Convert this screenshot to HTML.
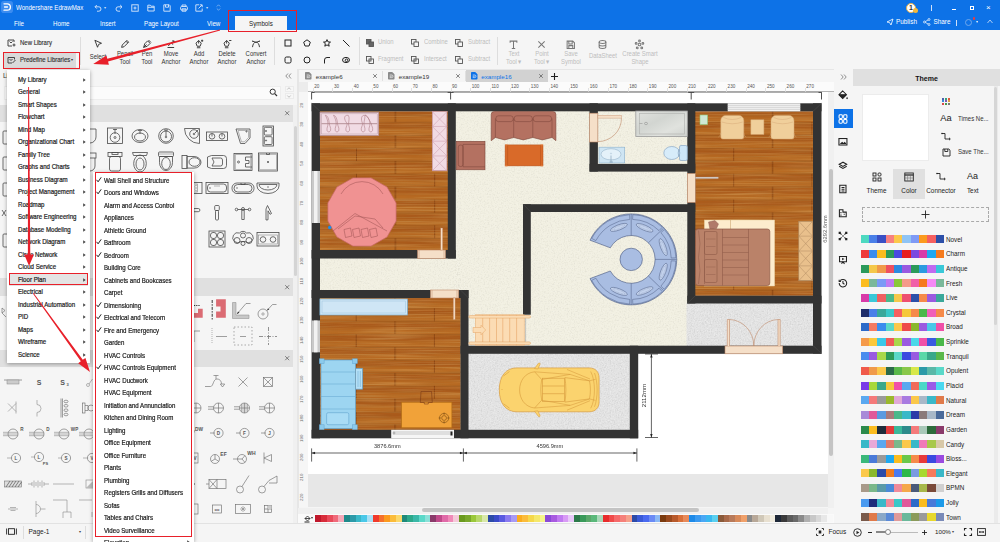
<!DOCTYPE html>
<html><head><meta charset="utf-8"><title>EdrawMax</title>
<style>
*{box-sizing:border-box;margin:0;padding:0}
html,body{width:1000px;height:542px;overflow:hidden;background:#f5f5f5}
body{position:relative;font-family:"Liberation Sans",sans-serif;font-size:7px;color:#222}
.a{position:absolute}
.t{position:absolute;white-space:nowrap;line-height:1}
svg{position:absolute;overflow:visible}
#title{left:0;top:0;width:1000px;height:30px;background:#0d72e7}
#title .t{color:#fff}
#ribbon{left:0;top:30px;width:1000px;height:39px;background:#f5f5f5}
.rl{color:#333;font-size:6.600px;text-align:center;transform:scaleX(.9);transform-origin:center}
.rd{color:#bdbdbd;font-size:6.600px;text-align:center;transform:scaleX(.9);transform-origin:center}
.mi{font-size:6.800px;color:#1a1a1a;left:18px;transform:scaleX(.9);transform-origin:left center;-webkit-text-stroke:.2px #1a1a1a}
.si{font-size:6.800px;color:#1a1a1a;left:104px;transform:scaleX(.9);transform-origin:left center;-webkit-text-stroke:.2px #1a1a1a}
.th{font-size:6.800px;color:#222;left:946px;transform:scaleX(.93);transform-origin:left center}
</style></head>
<body>
<div class="a" id="title">
<svg style="left:1.200px;top:1.200px" width="12" height="12" viewBox="0 0 12 12"><rect x="0" y="0" width="12" height="12" rx="2.800" fill="#3b8cf0"/><path d="M3 2.800h3.200a3.200 3.200 0 0 1 0 6.400H3M3.500 6h3" stroke="#fff" stroke-width="1.300" fill="none" stroke-linecap="round"/></svg>
<div class="t" style="left:16px;top:4.500px;font-size:6.800px;transform:scaleX(.9);transform-origin:left center">Wondershare EdrawMax</div>
<svg style="left:93.7px;top:3.500px" width="8" height="8" viewBox="0 0 8 8"><path d="M1.200 2.800h3.600a2.200 2.200 0 0 1 0 4.400H3M2.800 1L1 2.800l1.800 1.800" stroke="#dbe9fb" stroke-width=".9" fill="none"/></svg>
<svg style="left:114.7px;top:3.500px" width="8" height="8" viewBox="0 0 8 8"><path d="M6.800 2.800H3.200a2.200 2.200 0 0 0 0 4.400H5M5.200 1L7 2.800 5.200 4.600" stroke="#dbe9fb" stroke-width=".9" fill="none"/></svg>
<svg style="left:130.5px;top:3.500px" width="8" height="8" viewBox="0 0 8 8"><rect x=".8" y=".8" width="6.400" height="6.400" stroke="#dbe9fb" stroke-width=".9" fill="none"/><path d="M4 2.500v3M2.500 4h3" stroke="#dbe9fb" stroke-width=".9" fill="none"/></svg>
<svg style="left:147px;top:3.500px" width="8" height="8" viewBox="0 0 8 8"><path d="M.8 7V1.200h2.500l.8 1h3.100V7zM.8 3.300h6.400" stroke="#dbe9fb" stroke-width=".9" fill="none"/></svg>
<svg style="left:163px;top:3.500px" width="8" height="8" viewBox="0 0 8 8"><path d="M.8 .8h5.400l1 1V7.200H.8zM2.500 .8v2.400h3V.8" stroke="#dbe9fb" stroke-width=".9" fill="none"/></svg>
<svg style="left:179.5px;top:3.500px" width="8" height="8" viewBox="0 0 8 8"><rect x=".6" y="2.500" width="6.800" height="3.500" rx="1" stroke="#dbe9fb" stroke-width=".9" fill="none"/><path d="M2 2.500V1h4v1.500M2 4.800h4v2.400H2z" stroke="#dbe9fb" stroke-width=".9" fill="none"/></svg>
<svg style="left:195.3px;top:3.500px" width="8" height="8" viewBox="0 0 8 8"><path d="M4 .8H.8v6.400h6.400V4.500M3.500 4.500L7 1M4.800 .8H7.200v2.400" stroke="#dbe9fb" stroke-width=".9" fill="none"/></svg>
<div class="t" style="left:104px;top:5.500px;font-size:4px;color:#cfe0f8">&#9662;</div>
<div class="t" style="left:206px;top:5.500px;font-size:4px;color:#cfe0f8">&#9662;</div>
<svg style="left:216px;top:4px" width="5" height="7" viewBox="0 0 5 7"><path d="M.8 2.500L2.500 .8l1.700 1.700M.8 4.500l1.700 1.700 1.700-1.700" stroke="#9ec4f4" stroke-width=".7" fill="none"/></svg>
<div class="t" style="left:14px;top:21px;font-size:6.900px;transform:scaleX(.9);transform-origin:left center">File</div>
<div class="t" style="left:53px;top:21px;font-size:6.900px;transform:scaleX(.9);transform-origin:left center">Home</div>
<div class="t" style="left:100px;top:21px;font-size:6.900px;transform:scaleX(.9);transform-origin:left center">Insert</div>
<div class="t" style="left:144px;top:21px;font-size:6.900px;transform:scaleX(.9);transform-origin:left center">Page Layout</div>
<div class="t" style="left:207px;top:21px;font-size:6.900px;transform:scaleX(.9);transform-origin:left center">View</div>
<div class="a" style="left:235px;top:16px;width:52px;height:14px;background:#f5f5f5"></div>
<div class="t" style="left:249px;top:21px;font-size:6.900px;color:#222;transform:scaleX(.9);transform-origin:left center">Symbols</div>
<div class="a" style="left:906px;top:3px;width:10px;height:10px;border-radius:5px;background:#fff;border:1px solid #e8b04a"></div>
<div class="t" style="left:909px;top:4px;font-size:7px;color:#333;font-weight:bold">1</div>
<div class="a" style="left:913px;top:8px;width:5px;height:5px;border-radius:3px;background:#f5b83a"></div>
<div class="a" style="left:931px;top:5px;width:1px;height:6px;background:#cfe0f8"></div>
<div class="a" style="left:952px;top:9px;width:4px;height:1px;background:#fff"></div>
<div class="a" style="left:970px;top:6px;width:4px;height:4px;border:1px solid #fff"></div>
<div class="t" style="left:986px;top:4px;font-size:8px">&#215;</div>
<div class="t" style="left:896px;top:18.5px;font-size:6.4px">Publish</div>
<svg style="left:886px;top:18px" width="8" height="8" viewBox="0 0 8 8"><path d="M1 4l6-3-2 6-1.5-2.5z" stroke="#fff" stroke-width=".8" fill="none"/></svg>
<div class="t" style="left:933.5px;top:18.5px;font-size:6.4px">Share</div>
<svg style="left:923px;top:18px" width="8" height="8" viewBox="0 0 8 8"><circle cx="1.5" cy="4" r="1" stroke="#fff" stroke-width=".7" fill="none"/><circle cx="6" cy="1.5" r="1" stroke="#fff" stroke-width=".7" fill="none"/><circle cx="6" cy="6.5" r="1" stroke="#fff" stroke-width=".7" fill="none"/><path d="M2.4 3.5l2.7-1.5M2.4 4.5l2.7 1.5" stroke="#fff" stroke-width=".7"/></svg>
<div class="a" style="left:956px;top:20px;width:1px;height:6px;background:#cfe0f8"></div>
<div class="a" style="left:965px;top:18.5px;width:7px;height:7px;border-radius:4px;border:1px solid #6fa8ee"></div>
<div class="a" style="left:972.5px;top:17px;width:2.5px;height:2.5px;border-radius:2px;background:#f03a3a"></div>
<div class="t" style="left:976px;top:20px;font-size:4px;opacity:.9">&#9662;</div>
<svg style="left:987px;top:19px" width="6" height="5" viewBox="0 0 6 5"><path d="M.5 4l2.5-3 2.5 3" stroke="#cfe0f8" stroke-width=".8" fill="none"/></svg>
</div>
<div class="a" id="ribbon"></div>
<svg style="left:7px;top:39px" width="9" height="8" viewBox="0 0 9 8"><path d="M7 3V1H1v6h4M2.5 2.5L4 4l1.5-1.5M7 4.5v3M5.5 6h3" stroke="#333" stroke-width=".9" fill="none"/></svg>
<div class="t" style="left:20px;top:40.200px;font-size:6.800px;color:#333;transform:scaleX(.88);transform-origin:left center;-webkit-text-stroke:.15px #333">New Library</div>
<div class="a" style="left:4px;top:52.5px;width:72px;height:15px;background:#dadada"></div>
<svg style="left:7px;top:55.5px" width="9" height="8" viewBox="0 0 9 8"><path d="M7.5 3.5V1.5h-6.5v5.5h4M2.5 3L4 4.5 5.5 3M5.5 7l3-3" stroke="#333" stroke-width=".9" fill="none"/></svg>
<div class="t" style="left:20px;top:57.300px;font-size:6.800px;color:#333;transform:scaleX(.88);transform-origin:left center;-webkit-text-stroke:.15px #333">Predefine Libraries</div>
<div class="t" style="left:71px;top:58px;font-size:4px;color:#333">&#9662;</div>
<div class="a" style="left:80.200px;top:37px;width:1px;height:28px;background:#ddd"></div>
<svg style="left:92.5px;top:38.800px" width="10" height="10" viewBox="0 0 8 8"><path d="M1.500 1l5.300 2.400-2.300 .9-.9 2.300z" stroke="#333" stroke-width=".75" fill="none"/></svg>
<div class="t rl" style="left:77.5px;width:40px;top:53.5px">Select</div>
<svg style="left:120px;top:38.800px" width="10" height="10" viewBox="0 0 8 8"><path d="M1.300 6.700l.5-1.900 3.700-3.700 1.400 1.400-3.700 3.700zM4.800 1.800l1.400 1.400" stroke="#333" stroke-width=".75" fill="none"/></svg>
<div class="t rl" style="left:105px;width:40px;top:50.5px">Pencil</div>
<div class="t rl" style="left:105px;width:40px;top:58.600px">Tool</div>
<svg style="left:142px;top:38.800px" width="10" height="10" viewBox="0 0 8 8"><path d="M1.300 6.700l.9-2.900 2.300-2.300 2 2-2.300 2.300zM3.600 4.400l-2.300 2.300M5.200 .8l2 2" stroke="#333" stroke-width=".75" fill="none"/></svg>
<div class="t rl" style="left:127px;width:40px;top:50.5px">Pen</div>
<div class="t rl" style="left:127px;width:40px;top:58.600px">Tool</div>
<svg style="left:166px;top:38.800px" width="10" height="10" viewBox="0 0 8 8"><path d="M1.200 6.800h5.300M1.800 5.600l2.600-2.900 1 1.800M4.400 2.700l2.300-.9M5.200 1.200l1.500 .6-.7 1.400" stroke="#333" stroke-width=".75" fill="none"/></svg>
<div class="t rl" style="left:151px;width:40px;top:50.5px">Move</div>
<div class="t rl" style="left:151px;width:40px;top:58.600px">Anchor</div>
<svg style="left:194px;top:38.800px" width="10" height="10" viewBox="0 0 8 8"><path d="M3.700 1.200L5.800 3.300 4.900 5.800H2.500L1.600 3.300zM3.700 1.200V3.600M2.300 7h2.800 M6.500 .5v1.800M5.600 1.400h1.800" stroke="#333" stroke-width=".75" fill="none"/></svg>
<div class="t rl" style="left:179px;width:40px;top:50.5px">Add</div>
<div class="t rl" style="left:179px;width:40px;top:58.600px">Anchor</div>
<svg style="left:222px;top:38.800px" width="10" height="10" viewBox="0 0 8 8"><path d="M3.700 1.200L5.800 3.300 4.900 5.800H2.500L1.600 3.300zM3.700 1.200V3.600M2.300 7h2.800 M5.700 1.200h1.800" stroke="#333" stroke-width=".75" fill="none"/></svg>
<div class="t rl" style="left:207px;width:40px;top:50.5px">Delete</div>
<div class="t rl" style="left:207px;width:40px;top:58.600px">Anchor</div>
<svg style="left:251px;top:38.800px" width="10" height="10" viewBox="0 0 8 8"><path d="M1.200 6.500c.3-2.500 1.300-4 2.800-4s2.500 1.500 2.800 4M1.500 1.800l2.500 .9 2.500-.9" stroke="#333" stroke-width=".75" fill="none"/><circle cx="1.300" cy="1.700" r=".5" fill="#333"/><circle cx="6.700" cy="1.700" r=".5" fill="#333"/></svg>
<div class="t rl" style="left:236px;width:40px;top:50.5px">Convert</div>
<div class="t rl" style="left:236px;width:40px;top:58.600px">Anchor</div>
<div class="a" style="left:274px;top:37px;width:1px;height:28px;background:#ddd"></div>
<svg style="left:283.5px;top:39px" width="8" height="8" viewBox="0 0 8 8"><rect x="1" y="1" width="6" height="6" stroke="#222" stroke-width="1" fill="none"/></svg>
<svg style="left:303px;top:39px" width="8" height="8" viewBox="0 0 8 8"><path d="M4 .8l3.300 2.400-1.300 3.800h-4L.7 3.200z" stroke="#222" stroke-width="1" fill="none"/></svg>
<svg style="left:322.5px;top:39px" width="8" height="8" viewBox="0 0 8 8"><path d="M4 .6l1 2.300 2.500.2-1.900 1.600.6 2.500L4 5.900 1.800 7.200l.6-2.500L.5 3.100 3 2.900z" stroke="#222" stroke-width="1" fill="none"/></svg>
<svg style="left:342px;top:39px" width="8" height="8" viewBox="0 0 8 8"><path d="M1 1l6.500 6.500" stroke="#222" stroke-width="1" fill="none"/></svg>
<svg style="left:283.5px;top:55.5px" width="8" height="8" viewBox="0 0 8 8"><rect x="1" y="1" width="6" height="6" rx="1.500" stroke="#222" stroke-width="1" fill="none"/></svg>
<svg style="left:303px;top:55.5px" width="8" height="8" viewBox="0 0 8 8"><circle cx="4" cy="4" r="3" stroke="#222" stroke-width="1" fill="none"/></svg>
<svg style="left:322.5px;top:55.5px" width="8" height="8" viewBox="0 0 8 8"><path d="M1.500 7.500V4a2.500 2.500 0 0 1 2.500-2.500h3" stroke="#222" stroke-width="1" fill="none"/></svg>
<svg style="left:342px;top:55.5px" width="8" height="8" viewBox="0 0 8 8"><ellipse cx="4" cy="4" rx="3.500" ry="2.600" stroke="#222" stroke-width="1" fill="none"/><circle cx="4.500" cy="4.300" r="1.300" stroke="#222" stroke-width="1" fill="none"/></svg>
<div class="a" style="left:359px;top:37px;width:1px;height:28px;background:#ddd"></div>
<svg style="left:366px;top:39px" width="8" height="8" viewBox="0 0 8 8"><rect x=".5" y=".5" width="4.500" height="4.500" fill="#666" stroke="#555" stroke-width=".9"/><rect x="3" y="3" width="4.500" height="4.500" fill="#666" stroke="#555" stroke-width=".9"/></svg>
<div class="t rd" style="left:378px;top:39.4px;text-align:left;transform-origin:left center">Union</div>
<svg style="left:411px;top:39px" width="8" height="8" viewBox="0 0 8 8"><rect x=".5" y=".5" width="4.500" height="4.500" fill="none" stroke="#555" stroke-width=".9"/><rect x="3" y="3" width="4.500" height="4.500" fill="#f5f5f5" stroke="#555" stroke-width=".9"/></svg>
<div class="t rd" style="left:424px;top:39.4px;text-align:left;transform-origin:left center">Combine</div>
<svg style="left:455px;top:39px" width="8" height="8" viewBox="0 0 8 8"><rect x=".5" y=".5" width="4.500" height="4.500" fill="none" stroke="#555" stroke-width=".9"/><rect x="3" y="3" width="4.500" height="4.500" fill="#f5f5f5" stroke="#555" stroke-width=".9"/></svg>
<div class="t rd" style="left:468px;top:39.4px;text-align:left;transform-origin:left center">Subtract</div>
<svg style="left:366px;top:55.5px" width="8" height="8" viewBox="0 0 8 8"><rect x=".5" y=".5" width="4.500" height="4.500" fill="none" stroke="#555" stroke-width=".9"/><rect x="3" y="3" width="4.500" height="4.500" fill="none" stroke="#555" stroke-width=".9"/></svg>
<div class="t rd" style="left:378px;top:55.9px;text-align:left;transform-origin:left center">Fragment</div>
<svg style="left:411px;top:55.5px" width="8" height="8" viewBox="0 0 8 8"><rect x=".5" y=".5" width="4.500" height="4.500" fill="none" stroke="#555" stroke-width=".9"/><rect x="3" y="3" width="4.500" height="4.500" fill="none" stroke="#555" stroke-width=".9"/></svg>
<div class="t rd" style="left:424px;top:55.9px;text-align:left;transform-origin:left center">Intersect</div>
<svg style="left:455px;top:55.5px" width="8" height="8" viewBox="0 0 8 8"><rect x=".5" y=".5" width="4.500" height="4.500" fill="none" stroke="#555" stroke-width=".9"/><rect x="3" y="3" width="4.500" height="4.500" fill="#f5f5f5" stroke="#555" stroke-width=".9"/></svg>
<div class="t rd" style="left:468px;top:55.9px;text-align:left;transform-origin:left center">Subtract</div>
<div class="a" style="left:497px;top:37px;width:1px;height:28px;background:#ddd"></div>
<svg style="left:509.0px;top:39.500px" width="9" height="9" viewBox="0 0 8 8"><path d="M1 2.500V1h6v1.500M4 1v6.500M2.500 7.500h3" stroke="#777" stroke-width=".9" fill="none"/></svg>
<div class="t rd" style="left:488.5px;width:50px;top:50.500px">Text</div>
<div class="t rd" style="left:488.5px;width:50px;top:58.600px">Tool &#9662;</div>
<svg style="left:537.0px;top:39.500px" width="9" height="9" viewBox="0 0 8 8"><path d="M1.200 1.200l5.600 5.600M6.800 1.200L1.200 6.800" stroke="#777" stroke-width=".9" fill="none"/></svg>
<div class="t rd" style="left:516.5px;width:50px;top:50.500px">Point</div>
<div class="t rd" style="left:516.5px;width:50px;top:58.600px">Tool &#9662;</div>
<svg style="left:566.0px;top:39.500px" width="9" height="9" viewBox="0 0 8 8"><path d="M1 1h5l1.500 1.500V7.500H1zM2.500 1v2.500h3V1M2.500 7.500V5h3.500v2.500" stroke="#777" stroke-width=".9" fill="none"/></svg>
<div class="t rd" style="left:545.5px;width:50px;top:50.500px">Save</div>
<div class="t rd" style="left:545.5px;width:50px;top:58.600px">Symbol</div>
<svg style="left:598.0px;top:39.500px" width="9" height="9" viewBox="0 0 8 8"><ellipse cx="4" cy="1.800" rx="3" ry="1.300" stroke="#777" stroke-width=".9" fill="none"/><path d="M1 1.800v4.400c0 .7 1.300 1.300 3 1.300s3-.6 3-1.300V1.800M1 4c0 .7 1.300 1.300 3 1.300s3-.6 3-1.300" stroke="#777" stroke-width=".9" fill="none"/></svg>
<div class="t rd" style="left:577.5px;width:50px;top:53.300px">DataSheet</div>
<svg style="left:635.0px;top:39.500px" width="9" height="9" viewBox="0 0 8 8"><circle cx="4" cy="4" r="1.200" stroke="#777" stroke-width=".9" fill="none"/><circle cx="4" cy=".9" r=".8" stroke="#777" stroke-width=".9" fill="none"/><circle cx="1" cy="3" r=".8" stroke="#777" stroke-width=".9" fill="none"/><circle cx="7" cy="3" r=".8" stroke="#777" stroke-width=".9" fill="none"/><circle cx="2" cy="7" r=".8" stroke="#777" stroke-width=".9" fill="none"/><circle cx="6" cy="7" r=".8" stroke="#777" stroke-width=".9" fill="none"/></svg>
<div class="t rd" style="left:614.5px;width:50px;top:50.500px">Create Smart</div>
<div class="t rd" style="left:614.5px;width:50px;top:58.600px">Shape</div>
<div class="a" style="left:0;top:69px;width:298px;height:454px;background:#f5f5f5"></div>
<div class="t" style="left:3px;top:73px;font-size:6.5px;color:#333">Li</div>
<svg style="left:285px;top:72.5px" width="7" height="6" viewBox="0 0 7 6"><path d="M3 .5L.8 3 3 5.500M6 .5L3.800 3 6 5.500" stroke="#777" stroke-width=".8" fill="none"/></svg>
<div class="a" style="left:4px;top:85.500px;width:277px;height:14px;background:#fbfbfb;border:1px solid #ededed"></div>
<svg style="left:269px;top:88px" width="9" height="9" viewBox="0 0 9 9"><circle cx="3.700" cy="3.700" r="2.600" stroke="#333" stroke-width="1" fill="none"/><path d="M5.700 5.700L8 8" stroke="#333" stroke-width="1.200"/></svg>
<div class="a" style="left:284.500px;top:85.500px;width:9.300px;height:6.300px;border:1px solid #ebebeb;background:#f7f7f7"></div>
<div class="a" style="left:284.500px;top:93.200px;width:9.300px;height:6.300px;border:1px solid #ebebeb;background:#f7f7f7"></div>
<svg style="left:287.200px;top:87.200px" width="4" height="3" viewBox="0 0 4 3"><path d="M.3 2.500L2 .7l1.700 1.800" stroke="#999" stroke-width=".6" fill="none"/></svg>
<svg style="left:287.200px;top:95px" width="4" height="3" viewBox="0 0 4 3"><path d="M.3 .5L2 2.300 3.700 .5" stroke="#999" stroke-width=".6" fill="none"/></svg>
<div class="a" style="left:0;top:105px;width:293px;height:16.6px;background:#e0e0e0"></div>
<svg style="left:285px;top:111.10px" width="4.400" height="4.400" viewBox="0 0 4.400 4.400"><path d="M.2 .2l4 4M4.200 .2l-4 4" stroke="#555" stroke-width=".7"/></svg>
<div class="a" style="left:0;top:278px;width:293px;height:17.5px;background:#e0e0e0"></div>
<svg style="left:285px;top:284.55px" width="4.400" height="4.400" viewBox="0 0 4.400 4.400"><path d="M.2 .2l4 4M4.200 .2l-4 4" stroke="#555" stroke-width=".7"/></svg>
<div class="a" style="left:0;top:350px;width:293px;height:17px;background:#e0e0e0"></div>
<svg style="left:285px;top:356.30px" width="4.400" height="4.400" viewBox="0 0 4.400 4.400"><path d="M.2 .2l4 4M4.200 .2l-4 4" stroke="#555" stroke-width=".7"/></svg>
<div class="a" style="left:293px;top:105px;width:4px;height:418px;background:#f0f0f0"></div>
<div class="a" style="left:293.500px;top:126px;width:3px;height:149.500px;background:#d4d4d4;border-radius:1.500px"></div>
<svg style="left:78.0px;top:124.30000000000001px" width="24" height="24" viewBox="-12.0 -12.0 24 24"><path d="M-6 -7h12v8a6 6 0 0 1-12 0z" stroke="#4a4a4a" stroke-width=".8" fill="none"/></svg>
<svg style="left:103.0px;top:124.30000000000001px" width="24" height="24" viewBox="-12.0 -12.0 24 24"><rect x="-7.500" y="-8" width="15" height="15.500" stroke="#4a4a4a" stroke-width=".8" fill="none"/><circle cx="0" cy="1.500" r="4.800" stroke="#4a4a4a" stroke-width=".8" fill="none"/><circle cx="0" cy="1.500" r="1" stroke="#4a4a4a" stroke-width=".8" fill="none"/><path d="M0 -7v5M-2 -6.500h4" stroke="#4a4a4a" stroke-width=".8" fill="none"/></svg>
<svg style="left:128.4px;top:124.30000000000001px" width="24" height="24" viewBox="-12.0 -12.0 24 24"><ellipse cx="0" cy="0" rx="8" ry="6.500" stroke="#4a4a4a" stroke-width=".8" fill="none"/><ellipse cx="0" cy="1" rx="5.500" ry="4" stroke="#4a4a4a" stroke-width=".8" fill="none"/><path d="M0 -5v3M-2 -5.500h4" stroke="#4a4a4a" stroke-width=".8" fill="none"/></svg>
<svg style="left:154.2px;top:124.30000000000001px" width="24" height="24" viewBox="-12.0 -12.0 24 24"><circle cx="0" cy="0" r="7.300" stroke="#4a4a4a" stroke-width=".8" fill="none"/><circle cx="0" cy=".5" r="5.500" stroke="#4a4a4a" stroke-width=".8" fill="none"/><path d="M0 -6v6M-2 -6h4" stroke="#4a4a4a" stroke-width=".8" fill="none"/><circle cx="0" cy="1" r=".8" stroke="#4a4a4a" stroke-width=".8" fill="none"/></svg>
<svg style="left:180.0px;top:124.30000000000001px" width="24" height="24" viewBox="-12.0 -12.0 24 24"><path d="M-7.500 -7.500h15v15a15 15 0 0 1-15-15z" stroke="#4a4a4a" stroke-width=".8" fill="none"/><circle cx="2" cy="-2" r="4.300" stroke="#4a4a4a" stroke-width=".8" fill="none"/><circle cx="2" cy="-2" r=".8" stroke="#4a4a4a" stroke-width=".8" fill="none"/><path d="M6.500 -6.500l-3.500 3.500" stroke="#4a4a4a" stroke-width=".8" fill="none"/></svg>
<svg style="left:205.4px;top:124.30000000000001px" width="24" height="24" viewBox="-12.0 -12.0 24 24"><rect x="-10.500" y="-4" width="21" height="8.500" stroke="#4a4a4a" stroke-width=".8" fill="none"/><circle cx="-5" cy=".3" r="2.800" stroke="#4a4a4a" stroke-width=".8" fill="none"/><circle cx="5" cy=".3" r="2.800" stroke="#4a4a4a" stroke-width=".8" fill="none"/><path d="M-5 -2.500v3M5 -2.500v3" stroke="#4a4a4a" stroke-width=".8" fill="none"/></svg>
<svg style="left:230.5px;top:124.30000000000001px" width="24" height="24" viewBox="-12.0 -12.0 24 24"><path d="M-7 -7h14v9l-5 5.500h-4.500z" stroke="#4a4a4a" stroke-width=".8" fill="none"/><path d="M-5 -5.500h10.500v7l-4 4.300h-3z" stroke="#888" stroke-width=".6" fill="none"/><circle cx="3.500" cy="-4.500" r=".6" stroke="#4a4a4a" stroke-width=".8" fill="none"/></svg>
<svg style="left:256.3px;top:124.30000000000001px" width="24" height="24" viewBox="-12.0 -12.0 24 24"><rect x="-5" y="-10" width="10.500" height="20" stroke="#4a4a4a" stroke-width=".8" fill="none"/><rect x="-3.700" y="-8.700" width="7.800" height="7.800" rx="1" stroke="#4a4a4a" stroke-width=".8" fill="none"/><rect x="-3.700" y=".7" width="7.800" height="7.800" rx="1" stroke="#4a4a4a" stroke-width=".8" fill="none"/><circle cx="-2" cy="-5" r=".6" stroke="#4a4a4a" stroke-width=".8" fill="none"/><circle cx="-2" cy="4.500" r=".6" stroke="#4a4a4a" stroke-width=".8" fill="none"/></svg>
<svg style="left:78.0px;top:149.5px" width="24" height="24" viewBox="-12.0 -12.0 24 24"><rect x="-6" y="-9" width="12" height="5" stroke="#4a4a4a" stroke-width=".8" fill="none"/><path d="M-5 -4v8a5 5 0 0 0 10 0v-8" stroke="#4a4a4a" stroke-width=".8" fill="none"/></svg>
<svg style="left:103.0px;top:149.5px" width="24" height="24" viewBox="-12.0 -12.0 24 24"><rect x="-7" y="-9.500" width="14" height="4" stroke="#4a4a4a" stroke-width=".8" fill="none"/><rect x="-5.500" y="-5.500" width="11" height="14.500" rx="2" stroke="#4a4a4a" stroke-width=".8" fill="none"/><rect x="-3" y="-9.500" width="6" height="2" stroke="#4a4a4a" stroke-width=".8" fill="none"/></svg>
<svg style="left:128.4px;top:149.5px" width="24" height="24" viewBox="-12.0 -12.0 24 24"><path d="M-7.500 -9.500h15l-1 3h-13z" stroke="#4a4a4a" stroke-width=".8" fill="none"/><ellipse cx="0" cy="1.500" rx="6.300" ry="8.500" stroke="#4a4a4a" stroke-width=".8" fill="none"/><ellipse cx="0" cy="2" rx="4" ry="6" stroke="#4a4a4a" stroke-width=".8" fill="none"/></svg>
<svg style="left:154.2px;top:149.5px" width="24" height="24" viewBox="-12.0 -12.0 24 24"><rect x="-7.500" y="-10" width="15" height="4.500" rx="1" stroke="#4a4a4a" stroke-width=".8" fill="none"/><path d="M-6.500 -5.500v6a6.500 8 0 0 0 13 0v-6z" stroke="#4a4a4a" stroke-width=".8" fill="none"/><ellipse cx="0" cy="1.500" rx="4.300" ry="6" stroke="#4a4a4a" stroke-width=".8" fill="none"/><path d="M-7.500 -8h15" stroke="#888" stroke-width=".6" fill="none"/></svg>
<svg style="left:180.0px;top:149.5px" width="24" height="24" viewBox="-12.0 -12.0 24 24"><rect x="-10" y="-6.500" width="5" height="13" stroke="#4a4a4a" stroke-width=".8" fill="none"/><path d="M-5 -5.500h7a7 5.800 0 0 1 0 11.600h-7z" stroke="#4a4a4a" stroke-width=".8" fill="none"/><ellipse cx="2.500" cy="0" rx="5.500" ry="4.300" stroke="#4a4a4a" stroke-width=".8" fill="none"/></svg>
<svg style="left:205.4px;top:149.5px" width="24" height="24" viewBox="-12.0 -12.0 24 24"><path d="M-9.500 -5l4-1.500h12a3 3 0 0 1 3 3v7a3 3 0 0 1-3 3h-12l-4-1.500z" stroke="#4a4a4a" stroke-width=".8" fill="none"/><path d="M-5 -4h8.500a2 2 0 0 1 2 2v4a2 2 0 0 1-2 2H-5l2-4z" stroke="#4a4a4a" stroke-width=".8" fill="none"/></svg>
<svg style="left:230.5px;top:149.5px" width="24" height="24" viewBox="-12.0 -12.0 24 24"><rect x="-9" y="-8.500" width="18" height="17" stroke="#4a4a4a" stroke-width=".8" fill="none"/><path d="M9 -5h-6.500v3.500h3.500v3h-3.500v3.500h6.500" stroke="#4a4a4a" stroke-width=".8" fill="none"/><circle cx="-4.500" cy="0" r="1" stroke="#4a4a4a" stroke-width=".8" fill="none"/><rect x="-7.800" y="-7.300" width="15.600" height="14.600" stroke="#888" stroke-width=".6" fill="none"/></svg>
<svg style="left:256.3px;top:149.5px" width="24" height="24" viewBox="-12.0 -12.0 24 24"><rect x="-9.500" y="-9" width="19" height="18" stroke="#4a4a4a" stroke-width=".8" fill="none"/><rect x="-8.300" y="-7.800" width="16.600" height="15.600" stroke="#888" stroke-width=".6" fill="none"/><circle cx="0" cy="0" r="1" fill="#555"/><path d="M-1.500 -9v1.500h3v-1.500" stroke="#4a4a4a" stroke-width=".8" fill="none"/></svg>
<svg style="left:180.0px;top:175.7px" width="24" height="24" viewBox="-12.0 -12.0 24 24"><rect x="-10" y="-5.500" width="20" height="11" stroke="#4a4a4a" stroke-width=".8" fill="none"/><rect x="-8.500" y="-4" width="14" height="8" stroke="#888" stroke-width=".6" fill="none"/><path d="M-8 -3l13 6M-8 3l13-6M-8 0h13" stroke="#888" stroke-width=".6" fill="none"/></svg>
<svg style="left:205.4px;top:175.7px" width="24" height="24" viewBox="-12.0 -12.0 24 24"><rect x="-11" y="-5.500" width="22" height="11" stroke="#4a4a4a" stroke-width=".8" fill="none"/><rect x="-9.500" y="-4" width="19" height="8" rx="3" stroke="#4a4a4a" stroke-width=".8" fill="none"/><circle cx="-7" cy="0" r=".7" fill="#555"/><path d="M-3 -2h6" stroke="#888" stroke-width=".6" fill="none"/></svg>
<svg style="left:230.5px;top:175.7px" width="24" height="24" viewBox="-12.0 -12.0 24 24"><rect x="-11" y="-5" width="22" height="10.500" rx="5" stroke="#4a4a4a" stroke-width=".8" fill="none"/><rect x="-9" y="-3.500" width="18" height="7.500" rx="3.700" stroke="#4a4a4a" stroke-width=".8" fill="none"/><circle cx="-6" cy="0" r=".7" fill="#555"/><path d="M-2 -5v1.500h4v-1.500" stroke="#4a4a4a" stroke-width=".8" fill="none"/></svg>
<svg style="left:256.3px;top:175.7px" width="24" height="24" viewBox="-12.0 -12.0 24 24"><path d="M-11 -5h22v3a11 7.500 0 0 1-22 0z" stroke="#4a4a4a" stroke-width=".8" fill="none"/><path d="M-9 -3.500h18a9 5.500 0 0 1-18 0z" stroke="#4a4a4a" stroke-width=".8" fill="none"/><circle cx="0" cy="-1" r=".7" fill="#555"/></svg>
<svg style="left:184.0px;top:200.5px" width="24" height="24" viewBox="-12.0 -12.0 24 24"><path d="M-2.200 -5v12M-2.200 -4.500h4.500a1.200 1.200 0 0 1 0 3.200h-4.500" stroke="#4a4a4a" stroke-width=".8" fill="none"/></svg>
<svg style="left:205.4px;top:200.5px" width="24" height="24" viewBox="-12.0 -12.0 24 24"><rect x="-2.300" y="-7.500" width="4.600" height="5" rx="1" stroke="#4a4a4a" stroke-width=".8" fill="none"/><rect x="-1.500" y="-2.500" width="3" height="9.500" rx="1" stroke="#4a4a4a" stroke-width=".8" fill="none"/></svg>
<svg style="left:230.5px;top:200.5px" width="24" height="24" viewBox="-12.0 -12.0 24 24"><path d="M-5.500 -3.500h11M-1.200 -3.500v10h2.400v-10" stroke="#4a4a4a" stroke-width=".8" fill="none"/><circle cx="-6.500" cy="-3.500" r="1.300" stroke="#4a4a4a" stroke-width=".8" fill="none"/><circle cx="6.500" cy="-3.500" r="1.300" stroke="#4a4a4a" stroke-width=".8" fill="none"/><circle cx="0" cy="-4" r="1.500" stroke="#4a4a4a" stroke-width=".8" fill="none"/></svg>
<svg style="left:256.3px;top:200.5px" width="24" height="24" viewBox="-12.0 -12.0 24 24"><path d="M-2 7v-11l1.500-3.500 4 8-1.500.8-2-3.500v9z" stroke="#4a4a4a" stroke-width=".8" fill="none"/></svg>
<svg style="left:158.0px;top:227.4px" width="24" height="24" viewBox="-12.0 -12.0 24 24"><path d="M0 -8v3M0 -3v3M0 2v3M0 7v2" stroke="#aaa" stroke-width=".7"/></svg>
<svg style="left:205.4px;top:227.4px" width="24" height="24" viewBox="-12.0 -12.0 24 24"><rect x="-8" y="-8" width="16" height="16" stroke="#4a4a4a" stroke-width=".8" fill="none"/><rect x="-6.500" y="-6.500" width="6" height="6" rx="2.500" stroke="#4a4a4a" stroke-width=".8" fill="none"/><rect x=".5" y="-6.500" width="6" height="6" rx="2.500" stroke="#4a4a4a" stroke-width=".8" fill="none"/><rect x="-6.500" y=".5" width="6" height="6" rx="2.500" stroke="#4a4a4a" stroke-width=".8" fill="none"/><rect x=".5" y=".5" width="6" height="6" rx="2.500" stroke="#4a4a4a" stroke-width=".8" fill="none"/></svg>
<svg style="left:230.5px;top:227.4px" width="24" height="24" viewBox="-12.0 -12.0 24 24"><path d="M-3.500 -6a4.500 4.500 0 0 1 7 0a5 5 0 1 1-1.500 8.500h-4a5 5 0 1 1-1.500-8.500z" stroke="#4a4a4a" stroke-width=".8" fill="none"/><circle cx="-6" cy="1.500" r="3" stroke="#4a4a4a" stroke-width=".8" fill="none"/><circle cx="6" cy="1.500" r="3" stroke="#4a4a4a" stroke-width=".8" fill="none"/><circle cx="0" cy="-3.500" r="2.500" stroke="#4a4a4a" stroke-width=".8" fill="none"/><circle cx="0" cy="4.500" r="2" stroke="#4a4a4a" stroke-width=".8" fill="none"/></svg>
<svg style="left:256.3px;top:227.4px" width="24" height="24" viewBox="-12.0 -12.0 24 24"><rect x="-11" y="-6.500" width="22" height="13.500" stroke="#4a4a4a" stroke-width=".8" fill="none"/><rect x="-9.500" y="-4" width="19" height="9" stroke="#888" stroke-width=".6" fill="none"/><circle cx="-5" cy=".5" r="2.800" stroke="#4a4a4a" stroke-width=".8" fill="none"/><circle cx="5" cy=".5" r="2.800" stroke="#4a4a4a" stroke-width=".8" fill="none"/></svg>
<svg style="left:-1.0px;top:128.3px" width="10" height="20" viewBox="-5.0 -10.0 10 20"><rect x="-1" y="-7" width="6" height="13" rx="1" stroke="#4a4a4a" stroke-width=".8" fill="none"/></svg>
<svg style="left:-1.0px;top:153.5px" width="10" height="20" viewBox="-5.0 -10.0 10 20"><rect x="-1" y="-7" width="6" height="13" rx="1" stroke="#4a4a4a" stroke-width=".8" fill="none"/></svg>
<svg style="left:-1.0px;top:179.7px" width="10" height="20" viewBox="-5.0 -10.0 10 20"><rect x="-1" y="-7" width="6" height="13" rx="1" stroke="#4a4a4a" stroke-width=".8" fill="none"/></svg>
<svg style="left:-1.0px;top:231.4px" width="10" height="20" viewBox="-5.0 -10.0 10 20"><rect x="-1" y="-7" width="6" height="13" rx="1" stroke="#4a4a4a" stroke-width=".8" fill="none"/></svg>
<svg style="left:-1.0px;top:202.5px" width="10" height="20" viewBox="-5.0 -10.0 10 20"><path d="M-2 -3l4 6M2 -3l-4 6" stroke="#4a4a4a" stroke-width=".8" fill="none"/></svg>
<svg style="left:0;top:0" width="300" height="542" viewBox="0 0 300 542"><path d="M193 313h5v-4.200h4.700v8.900H193z" fill="#db6b73"/><path d="M216.100 299.200h9.700v18.500h-9.700v-6.300h4.400v-4.800h-4.400z" fill="#db6b73"/><path d="M194 305.500h6" stroke="#333" stroke-width="1" stroke-dasharray="1.200 1"/><path d="M212.200 300v20" stroke="#222" stroke-width=".9" stroke-dasharray="3 1.200 1.500 1.200"/></svg>
<svg style="left:228.5px;top:297.5px" width="24" height="24" viewBox="-12.0 -12.0 24 24"><path d="M-8.500 -7.500h3.500v12.500h13v3.500h-16.500z" fill="#c8c8c8" stroke="#888" stroke-width=".5"/><path d="M-4 4l9-10.500h4.500" stroke="#6e6e6e" stroke-width=".65" fill="none"/><path d="M-4 4l1-2.500 1.500 1.300z" fill="#333"/></svg>
<svg style="left:254.0px;top:297.5px" width="24" height="24" viewBox="-12.0 -12.0 24 24"><circle cx="-3" cy="4" r="5" stroke="#6e6e6e" stroke-width=".65" fill="none"/><path d="M-5 4h4M-3 2v4" stroke="#888" stroke-width=".6" fill="none"/><path d="M1 .5l5.500-6h4" stroke="#6e6e6e" stroke-width=".65" fill="none"/><path d="M1 .5l1-2.300 1.300 1.300z" fill="#333"/></svg>
<svg style="left:187.0px;top:324.3px" width="24" height="24" viewBox="-12.0 -12.0 24 24"><path d="M-5 -5v11M-5 -5h6" stroke="#6e6e6e" stroke-width=".65" fill="none"/></svg>
<svg style="left:208.5px;top:324.3px" width="24" height="24" viewBox="-12.0 -12.0 24 24"><path d="M-9 -8v16" stroke="#999" stroke-width=".7" stroke-dasharray="1 1"/><path d="M-5 .5h11" stroke="#6e6e6e" stroke-width=".65" fill="none"/></svg>
<svg style="left:230.5px;top:324.3px" width="24" height="24" viewBox="-12.0 -12.0 24 24"><rect x="-9" y="-9" width="18" height="18" stroke="#8a8a8a" stroke-width=".7" fill="none" stroke-dasharray="1.500 2"/><path d="M-3 .5h6" stroke="#6e6e6e" stroke-width=".65" fill="none"/></svg>
<svg style="left:256.0px;top:324.3px" width="24" height="24" viewBox="-12.0 -12.0 24 24"><path d="M-9 .5h18M.5 -9v18" stroke="#777" stroke-width=".8" stroke-dasharray="4 1.500 1 1.500"/></svg>
<svg style="left:0.0px;top:301.0px" width="10" height="20" viewBox="-5.0 -10.0 10 20"><path d="M-3 -3l3 2.500-3 2.500z" stroke="#6e6e6e" stroke-width=".65" fill="none"/><path d="M-3 2l4 4" stroke="#6e6e6e" stroke-width=".65" fill="none"/></svg>
<svg style="left:0.5px;top:370.3px" width="24" height="24" viewBox="-12.0 -12.0 24 24"><path d="M-9 -2h18" stroke="#6e6e6e" stroke-width=".65" fill="none"/><rect x="-6" y="-2" width="12" height="4" fill="#ccc" stroke="#888" stroke-width=".5"/></svg>
<svg style="left:26.5px;top:370.3px" width="24" height="24" viewBox="-12.0 -12.0 24 24"><text x="0" y="2.5" font-size="7" font-family="Liberation Sans" font-weight="bold" fill="#555" text-anchor="middle">S</text></svg>
<svg style="left:52.0px;top:370.3px" width="24" height="24" viewBox="-12.0 -12.0 24 24"><text x="-1.5" y="2.5" font-size="7" font-family="Liberation Sans" font-weight="bold" fill="#555" text-anchor="middle">S</text><text x="3.5" y="3.5" font-size="4" font-family="Liberation Sans" font-weight="bold" fill="#555" text-anchor="middle">3</text></svg>
<svg style="left:77.0px;top:370.3px" width="24" height="24" viewBox="-12.0 -12.0 24 24"><circle cx="-1" cy="3" r="1.500" stroke="#888" stroke-width=".6" fill="none"/><path d="M0 2l3.500-5" stroke="#888" stroke-width=".6" fill="none"/></svg>
<svg style="left:205.4px;top:370.3px" width="24" height="24" viewBox="-12.0 -12.0 24 24"><path d="M-12 4.500h5.500c3 0 2.500-7.500 6.500-7.500s4.500 4 4.500 5M-1 -3v-3.500M-3.500 -6.500h5" stroke="#6e6e6e" stroke-width=".65" fill="none"/><path d="M3.300 2h4.400l-2.200 3z" stroke="#6e6e6e" stroke-width=".65" fill="none"/></svg>
<svg style="left:230.8px;top:370.3px" width="24" height="24" viewBox="-12.0 -12.0 24 24"><path d="M-4.500 -4.500l9 9M4.500 -4.500l-9 9" stroke="#6e6e6e" stroke-width=".65" fill="none"/></svg>
<svg style="left:256.2px;top:370.3px" width="24" height="24" viewBox="-12.0 -12.0 24 24"><rect x="-4.500" y="-4.500" width="9" height="9" stroke="#6e6e6e" stroke-width=".65" fill="none"/><path d="M-4.500 -4.500l9 9M4.500 -4.500l-9 9" stroke="#6e6e6e" stroke-width=".65" fill="none"/></svg>
<svg style="left:0.5px;top:395.6px" width="24" height="24" viewBox="-12.0 -12.0 24 24"><path d="M-5 -4.500l8 8M-5 3.500l8-8M3 -6.500v12" stroke="#888" stroke-width=".6" fill="none"/></svg>
<svg style="left:26.5px;top:395.6px" width="24" height="24" viewBox="-12.0 -12.0 24 24"><path d="M-2 -8v4.500a4 4 0 0 1 0 8v4" stroke="#888" stroke-width=".6" fill="none"/></svg>
<svg style="left:52.0px;top:395.6px" width="24" height="24" viewBox="-12.0 -12.0 24 24"><path d="M-3 -9.500v19M-1.500 -9.500v19" stroke="#6e6e6e" stroke-width=".65" fill="none"/><ellipse cx="2" cy="-6.500" rx="2" ry="1.300" stroke="#6e6e6e" stroke-width=".65" fill="none"/><ellipse cx="2" cy="-2.200" rx="2" ry="1.300" stroke="#6e6e6e" stroke-width=".65" fill="none"/><ellipse cx="2" cy="2.200" rx="2" ry="1.300" stroke="#6e6e6e" stroke-width=".65" fill="none"/><ellipse cx="2" cy="6.500" rx="2" ry="1.300" stroke="#6e6e6e" stroke-width=".65" fill="none"/></svg>
<svg style="left:77.0px;top:395.6px" width="24" height="24" viewBox="-12.0 -12.0 24 24"><rect x="-6.500" y="-5" width="2.500" height="10" stroke="#6e6e6e" stroke-width=".65" fill="none"/><path d="M-4 -2.500h3v5h-3" stroke="#6e6e6e" stroke-width=".65" fill="none"/><circle cx="2" cy="0" r="3" stroke="#6e6e6e" stroke-width=".65" fill="none"/></svg>
<svg style="left:205.4px;top:395.6px" width="24" height="24" viewBox="-12.0 -12.0 24 24"><circle cx="1.5" cy="0" r="5" stroke="#6e6e6e" stroke-width=".65" fill="none"/><path d="M-3.5 0h10M1.5 -5v10" stroke="#6e6e6e" stroke-width=".65" fill="none"/><path d="M-9 -1.200h5.700M-9 1.200h5.700" stroke="#6e6e6e" stroke-width=".65" fill="none"/></svg>
<svg style="left:230.8px;top:395.6px" width="24" height="24" viewBox="-12.0 -12.0 24 24"><circle cx="1.5" cy="0" r="5" stroke="#6e6e6e" stroke-width=".65" fill="none"/><path d="M-3.5 0h10M1.5 -5v10" stroke="#6e6e6e" stroke-width=".65" fill="none"/><path d="M-9 -1.200h5.700M-9 1.200h5.700" stroke="#6e6e6e" stroke-width=".65" fill="none"/><path d="M-1.500 -4v8M0 -4.700v9.400M3 -4.700v9.400M4.500 -4v8" stroke="#888" stroke-width=".6" fill="none"/></svg>
<svg style="left:256.2px;top:395.6px" width="24" height="24" viewBox="-12.0 -12.0 24 24"><circle cx="1.5" cy="0" r="5" stroke="#6e6e6e" stroke-width=".65" fill="none"/><path d="M-3.5 0h10M1.5 -5v10" stroke="#6e6e6e" stroke-width=".65" fill="none"/><path d="M-9 -1.200h5.700M-9 1.200h5.700" stroke="#6e6e6e" stroke-width=".65" fill="none"/></svg>
<svg style="left:183.5px;top:395.6px" width="24" height="24" viewBox="-12.0 -12.0 24 24"><circle cx="0" cy="0" r="5" stroke="#6e6e6e" stroke-width=".65" fill="none"/><path d="M-5 0h10M0 -5v10" stroke="#6e6e6e" stroke-width=".65" fill="none"/></svg>
<svg style="left:0.5px;top:421.0px" width="24" height="24" viewBox="-12.0 -12.0 24 24"><circle cx="0" cy="1" r="5" stroke="#6e6e6e" stroke-width=".65" fill="none"/><path d="M-10 -.7h15M-10 1h15M-10 2.700h15" stroke="#888" stroke-width=".6" fill="none"/><text x="9" y="-2.5" font-size="4.6" font-family="Liberation Sans" font-weight="bold" fill="#555" text-anchor="middle">R</text></svg>
<svg style="left:26.5px;top:421.0px" width="24" height="24" viewBox="-12.0 -12.0 24 24"><circle cx="0" cy="1" r="5" stroke="#6e6e6e" stroke-width=".65" fill="none"/><path d="M-10 -.7h15M-10 1h15M-10 2.700h15" stroke="#888" stroke-width=".6" fill="none"/><text x="9" y="-2.5" font-size="4.6" font-family="Liberation Sans" font-weight="bold" fill="#555" text-anchor="middle">D</text></svg>
<svg style="left:52.0px;top:421.0px" width="24" height="24" viewBox="-12.0 -12.0 24 24"><circle cx="0" cy="1" r="5" stroke="#6e6e6e" stroke-width=".65" fill="none"/><path d="M-10 -.7h15M-10 1h15M-10 2.700h15" stroke="#888" stroke-width=".6" fill="none"/><text x="10.5" y="-2.5" font-size="4.6" font-family="Liberation Sans" font-weight="bold" fill="#555" text-anchor="middle">WP</text></svg>
<svg style="left:77.0px;top:421.0px" width="24" height="24" viewBox="-12.0 -12.0 24 24"><circle cx="0" cy="1" r="5" stroke="#6e6e6e" stroke-width=".65" fill="none"/><path d="M-10 -.7h15M-10 1h15M-10 2.700h15" stroke="#888" stroke-width=".6" fill="none"/><text x="9" y="-2.5" font-size="4.6" font-family="Liberation Sans" font-weight="bold" fill="#555" text-anchor="middle"></text></svg>
<svg style="left:183.4px;top:421.0px" width="24" height="24" viewBox="-12.0 -12.0 24 24"><path d="M-3 4l3-7" stroke="#888" stroke-width=".6" fill="none"/><text x="4" y="-2" font-size="4.8" font-family="Liberation Sans" font-weight="bold" fill="#555" text-anchor="middle">DW</text></svg>
<svg style="left:205.4px;top:421.0px" width="24" height="24" viewBox="-12.0 -12.0 24 24"><circle cx="1.500" cy="0" r="4.600" stroke="#6e6e6e" stroke-width=".65" fill="none"/><path d="M-7 0h4.700" stroke="#6e6e6e" stroke-width=".65" fill="none"/><text x="1.5" y="1.6" font-size="4.6" font-family="Liberation Sans" font-weight="bold" fill="#555" text-anchor="middle">D</text></svg>
<svg style="left:230.8px;top:421.0px" width="24" height="24" viewBox="-12.0 -12.0 24 24"><circle cx="1.500" cy="0" r="4.600" stroke="#6e6e6e" stroke-width=".65" fill="none"/><path d="M-7 0h4.700" stroke="#6e6e6e" stroke-width=".65" fill="none"/><text x="1.5" y="1.6" font-size="4.6" font-family="Liberation Sans" font-weight="bold" fill="#555" text-anchor="middle">F</text></svg>
<svg style="left:256.2px;top:421.0px" width="24" height="24" viewBox="-12.0 -12.0 24 24"><circle cx="1.500" cy="0" r="4.600" stroke="#6e6e6e" stroke-width=".65" fill="none"/><path d="M-7 0h4.700" stroke="#6e6e6e" stroke-width=".65" fill="none"/><text x="1.5" y="1.6" font-size="4.6" font-family="Liberation Sans" font-weight="bold" fill="#555" text-anchor="middle">J</text></svg>
<svg style="left:0.5px;top:446.3px" width="24" height="24" viewBox="-12.0 -12.0 24 24"><circle cx="3" cy="0" r="4.600" stroke="#6e6e6e" stroke-width=".65" fill="none"/><path d="M-6 0h5.200" stroke="#888" stroke-width=".6" fill="none"/><text x="3" y="1.6" font-size="4.6" font-family="Liberation Sans" font-weight="bold" fill="#555" text-anchor="middle">L</text></svg>
<svg style="left:26.5px;top:446.3px" width="24" height="24" viewBox="-12.0 -12.0 24 24"><circle cx="0" cy="-1" r="4.600" stroke="#6e6e6e" stroke-width=".65" fill="none"/><path d="M-8 -1h4.200" stroke="#888" stroke-width=".6" fill="none"/><text x="0" y="0.6" font-size="4.6" font-family="Liberation Sans" font-weight="bold" fill="#555" text-anchor="middle">L</text><text x="6.5" y="6.5" font-size="4" font-family="Liberation Sans" font-weight="bold" fill="#555" text-anchor="middle">PS</text></svg>
<svg style="left:52.0px;top:446.3px" width="24" height="24" viewBox="-12.0 -12.0 24 24"><circle cx="2" cy="0" r="4.600" stroke="#6e6e6e" stroke-width=".65" fill="none"/><path d="M-6 0h4.200" stroke="#888" stroke-width=".6" fill="none"/><text x="2" y="1.6" font-size="4.6" font-family="Liberation Sans" font-weight="bold" fill="#555" text-anchor="middle">S</text></svg>
<svg style="left:77.0px;top:446.3px" width="24" height="24" viewBox="-12.0 -12.0 24 24"><circle cx="3" cy="0" r="4.600" stroke="#6e6e6e" stroke-width=".65" fill="none"/><path d="M-6 0h5.200" stroke="#888" stroke-width=".6" fill="none"/><text x="3" y="1.6" font-size="4.6" font-family="Liberation Sans" font-weight="bold" fill="#555" text-anchor="middle">V</text></svg>
<svg style="left:184.4px;top:446.3px" width="24" height="24" viewBox="-12.0 -12.0 24 24"><rect x="-6" y="-5" width="8" height="10" stroke="#6e6e6e" stroke-width=".65" fill="none"/><text x="-1" y="1.7" font-size="4.6" font-family="Liberation Sans" font-weight="bold" fill="#555" text-anchor="middle">V</text></svg>
<svg style="left:205.4px;top:446.3px" width="24" height="24" viewBox="-12.0 -12.0 24 24"><circle cx="-2" cy="1" r="4.500" stroke="#6e6e6e" stroke-width=".65" fill="none"/><path d="M-2 1v-4.500M-2 1l3.800 2.300M-2 1l-3.800 2.300" stroke="#6e6e6e" stroke-width=".65" fill="none"/><text x="6.5" y="-2.5" font-size="5" font-family="Liberation Sans" font-weight="bold" fill="#555" text-anchor="middle">EF</text></svg>
<svg style="left:230.8px;top:446.3px" width="24" height="24" viewBox="-12.0 -12.0 24 24"><circle cx="-1" cy="1" r="4.500" stroke="#6e6e6e" stroke-width=".65" fill="none"/><path d="M-1 1h-9M-1 1l3 -3.500M-1 1l3 3.500" stroke="#6e6e6e" stroke-width=".65" fill="none"/><text x="8.5" y="-3" font-size="5" font-family="Liberation Sans" font-weight="bold" fill="#555" text-anchor="middle">WH</text></svg>
<svg style="left:256.2px;top:446.3px" width="24" height="24" viewBox="-12.0 -12.0 24 24"><path d="M-4 -5.500v11M-4 0l7.500-3.500v7z" stroke="#6e6e6e" stroke-width=".65" fill="none"/></svg>
<svg style="left:0.5px;top:471.8px" width="24" height="24" viewBox="-12.0 -12.0 24 24"><rect x="-8.500" y="-3" width="17" height="6" fill="#ddd" stroke="#777" stroke-width=".6"/><path d="M-7 3l4-6M-4 3l4-6M-1 3l4-6M2 3l4-6M5 3l3.500-5" stroke="#555" stroke-width=".7"/></svg>
<svg style="left:26.5px;top:471.8px" width="24" height="24" viewBox="-12.0 -12.0 24 24"><path d="M-11 0h4M-7 -2v4M-5 -3.500v7M-3 -2v4M-1 -3.500v7M1 -2v4M3 -3.500v7M5 -2v4M5 0h5" stroke="#888" stroke-width=".6" fill="none"/></svg>
<svg style="left:52.0px;top:471.8px" width="24" height="24" viewBox="-12.0 -12.0 24 24"><path d="M-11 0h21" stroke="#888" stroke-width=".6" fill="none"/></svg>
<svg style="left:77.0px;top:471.8px" width="24" height="24" viewBox="-12.0 -12.0 24 24"><rect x="-3" y="-4" width="8" height="8" stroke="#888" stroke-width=".6" fill="none"/><path d="M-3 4l8-8v8z" fill="#bbb"/></svg>
<svg style="left:183.4px;top:471.8px" width="24" height="24" viewBox="-12.0 -12.0 24 24"><path d="M-3 -3l3 3-3 3" stroke="#6e6e6e" stroke-width=".65" fill="none"/></svg>
<svg style="left:205.4px;top:471.8px" width="24" height="24" viewBox="-12.0 -12.0 24 24"><rect x="-8" y="-4.500" width="17" height="9" stroke="#6e6e6e" stroke-width=".65" fill="none"/><path d="M-8 -4.500l8 9M-8 4.500l8-9M-11 0h3M0 -4.500v9" stroke="#6e6e6e" stroke-width=".65" fill="none"/></svg>
<svg style="left:230.8px;top:471.8px" width="24" height="24" viewBox="-12.0 -12.0 24 24"><circle cx="-3" cy="5.500" r="3.500" stroke="#6e6e6e" stroke-width=".65" fill="none"/><path d="M-1 2.500l7-11" stroke="#6e6e6e" stroke-width=".65" fill="none"/></svg>
<svg style="left:256.2px;top:471.8px" width="24" height="24" viewBox="-12.0 -12.0 24 24"><circle cx="-6" cy="5.500" r="3.500" stroke="#6e6e6e" stroke-width=".65" fill="none"/><path d="M-4 2.500l5-6 8-4.500v7h-8" stroke="#6e6e6e" stroke-width=".65" fill="none"/></svg>
<svg style="left:0.5px;top:496.6px" width="24" height="24" viewBox="-12.0 -12.0 24 24"><path d="M-5 0h10M-3 -1.500h6M-2.500 1.500h5" stroke="#888" stroke-width=".6" fill="none"/></svg>
<svg style="left:26.5px;top:496.6px" width="24" height="24" viewBox="-12.0 -12.0 24 24"><path d="M-3 -8v16M-3 -4.500a4.500 4.500 0 0 1 0 9M1.500 0h5" stroke="#888" stroke-width=".6" fill="none"/></svg>
<svg style="left:52.0px;top:496.6px" width="24" height="24" viewBox="-12.0 -12.0 24 24"><path d="M-11 -9h14v12M-1 9v-6h8v6" stroke="#888" stroke-width=".6" fill="none"/></svg>
<svg style="left:77.0px;top:496.6px" width="24" height="24" viewBox="-12.0 -12.0 24 24"><path d="M-10 -9h13M3 3v5" stroke="#888" stroke-width=".6" fill="none"/></svg>
<svg style="left:184.4px;top:496.6px" width="24" height="24" viewBox="-12.0 -12.0 24 24"><rect x="-8" y="-5" width="10" height="10" stroke="#6e6e6e" stroke-width=".65" fill="none"/></svg>
<svg style="left:205.4px;top:496.6px" width="24" height="24" viewBox="-12.0 -12.0 24 24"><rect x="-4.500" y="-4" width="9" height="8" stroke="#6e6e6e" stroke-width=".65" fill="none"/><text x="0" y="1.5" font-size="4" font-family="Liberation Sans" font-weight="bold" fill="#555" text-anchor="middle">oo</text></svg>
<svg style="left:230.8px;top:496.6px" width="24" height="24" viewBox="-12.0 -12.0 24 24"><rect x="-7.500" y="-4.500" width="15" height="9" stroke="#6e6e6e" stroke-width=".65" fill="none"/><path d="M-3 0h6M0 -3v6M-2 -2l4 4M2 -2l-4 4" stroke="#888" stroke-width=".6" fill="none"/></svg>
<svg style="left:256.2px;top:496.6px" width="24" height="24" viewBox="-12.0 -12.0 24 24"><rect x="-3.500" y="-3.500" width="7" height="7" stroke="#6e6e6e" stroke-width=".65" fill="none"/><path d="M-3.500 0h7M0 -3.500v7" stroke="#6e6e6e" stroke-width=".65" fill="none"/><rect x="0" y="-3.500" width="3.500" height="3.500" fill="#ccc"/></svg>
<div class="a" style="left:297px;top:69px;width:1.500px;height:454px;background:#e6e6e6"></div>
<div class="a" style="left:298.500px;top:69px;width:535.500px;height:13.300px;background:#f5f5f5;border-top:1px solid #e6e6e6"></div>
<div class="a" style="left:466px;top:69.500px;width:81.500px;height:12.800px;background:#d2d2d2"></div>
<svg style="left:305px;top:72.300px" width="6.500" height="7.500" viewBox="0 0 6.500 7.500"><path d="M.8 0h3.400l2.300 2.300v4.400a.8.800 0 0 1-.8.800H.8a.8.800 0 0 1-.8-.800V.8A.8.800 0 0 1 .8 0z" fill="#8a8a8a"/><path d="M1.700 3h2a1.300 1.300 0 0 1 0 2.600h-2M1.700 4.300h2" stroke="#fff" stroke-width=".6" fill="none"/></svg>
<div class="t" style="left:315.8px;top:73.900px;font-size:6.200px;color:#333">example6</div>
<svg style="left:373px;top:74.300px" width="4" height="4" viewBox="0 0 4 4"><path d="M.2 .2l3.600 3.600M3.800 .2L.2 3.800" stroke="#555" stroke-width=".7"/></svg>
<svg style="left:388px;top:72.300px" width="6.500" height="7.500" viewBox="0 0 6.500 7.500"><path d="M.8 0h3.400l2.300 2.300v4.400a.8.800 0 0 1-.8.800H.8a.8.800 0 0 1-.8-.800V.8A.8.800 0 0 1 .8 0z" fill="#8a8a8a"/><path d="M1.700 3h2a1.300 1.300 0 0 1 0 2.600h-2M1.700 4.300h2" stroke="#fff" stroke-width=".6" fill="none"/></svg>
<div class="t" style="left:398.8px;top:73.900px;font-size:6.200px;color:#333">example19</div>
<svg style="left:456px;top:74.300px" width="4" height="4" viewBox="0 0 4 4"><path d="M.2 .2l3.600 3.600M3.800 .2L.2 3.800" stroke="#555" stroke-width=".7"/></svg>
<svg style="left:470.5px;top:72.300px" width="6.500" height="7.500" viewBox="0 0 6.500 7.500"><path d="M.8 0h3.400l2.300 2.300v4.400a.8.800 0 0 1-.8.800H.8a.8.800 0 0 1-.8-.800V.8A.8.800 0 0 1 .8 0z" fill="#0d72e7"/><path d="M1.700 3h2a1.300 1.300 0 0 1 0 2.600h-2M1.700 4.300h2" stroke="#fff" stroke-width=".6" fill="none"/></svg>
<div class="t" style="left:481.3px;top:73.900px;font-size:6.200px;color:#0d72e7">example16</div>
<svg style="left:538.5px;top:74.300px" width="4" height="4" viewBox="0 0 4 4"><path d="M.2 .2l3.600 3.600M3.800 .2L.2 3.800" stroke="#555" stroke-width=".7"/></svg>
<div class="a" style="left:381.500px;top:71px;width:1px;height:10px;background:#e0e0e0"></div>
<div class="a" style="left:465px;top:71px;width:1px;height:10px;background:#e0e0e0"></div>
<svg style="left:551px;top:72.500px" width="7" height="7" viewBox="0 0 7 7"><path d="M3.500 0v7M0 3.500h7" stroke="#222" stroke-width="1.100"/></svg>
<div class="a" style="left:298.500px;top:82.300px;width:535.500px;height:9.800px;background:#fbfbfb;border-bottom:1px solid #b4b4b4"></div>
<div class="a" style="left:298.500px;top:82.300px;width:9px;height:425px;background:#f6f6f6"></div>
<div class="a" style="left:298.500px;top:82.300px;width:9px;height:9.500px;background:#ececec"></div>
<div class="t" style="left:314.30px;top:85px;font-size:4.600px;color:#555">20</div>
<div class="a" style="left:312.80px;top:87.500px;width:.6px;height:4px;background:#e0e0e0"></div>
<div class="t" style="left:333.98px;top:85px;font-size:4.600px;color:#555">30</div>
<div class="a" style="left:332.48px;top:87.500px;width:.6px;height:4px;background:#e0e0e0"></div>
<div class="t" style="left:353.66px;top:85px;font-size:4.600px;color:#555">40</div>
<div class="a" style="left:352.16px;top:87.500px;width:.6px;height:4px;background:#e0e0e0"></div>
<div class="t" style="left:373.34px;top:85px;font-size:4.600px;color:#555">50</div>
<div class="a" style="left:371.84px;top:87.500px;width:.6px;height:4px;background:#e0e0e0"></div>
<div class="t" style="left:393.02px;top:85px;font-size:4.600px;color:#555">60</div>
<div class="a" style="left:391.52px;top:87.500px;width:.6px;height:4px;background:#e0e0e0"></div>
<div class="t" style="left:412.70px;top:85px;font-size:4.600px;color:#555">70</div>
<div class="a" style="left:411.20px;top:87.500px;width:.6px;height:4px;background:#e0e0e0"></div>
<div class="t" style="left:432.38px;top:85px;font-size:4.600px;color:#555">80</div>
<div class="a" style="left:430.88px;top:87.500px;width:.6px;height:4px;background:#e0e0e0"></div>
<div class="t" style="left:452.06px;top:85px;font-size:4.600px;color:#555">90</div>
<div class="a" style="left:450.56px;top:87.500px;width:.6px;height:4px;background:#e0e0e0"></div>
<div class="t" style="left:471.74px;top:85px;font-size:4.600px;color:#555">100</div>
<div class="a" style="left:470.24px;top:87.500px;width:.6px;height:4px;background:#e0e0e0"></div>
<div class="t" style="left:491.42px;top:85px;font-size:4.600px;color:#555">110</div>
<div class="a" style="left:489.92px;top:87.500px;width:.6px;height:4px;background:#e0e0e0"></div>
<div class="t" style="left:511.10px;top:85px;font-size:4.600px;color:#555">120</div>
<div class="a" style="left:509.60px;top:87.500px;width:.6px;height:4px;background:#e0e0e0"></div>
<div class="t" style="left:530.78px;top:85px;font-size:4.600px;color:#555">130</div>
<div class="a" style="left:529.28px;top:87.500px;width:.6px;height:4px;background:#e0e0e0"></div>
<div class="t" style="left:550.46px;top:85px;font-size:4.600px;color:#555">140</div>
<div class="a" style="left:548.96px;top:87.500px;width:.6px;height:4px;background:#e0e0e0"></div>
<div class="t" style="left:570.14px;top:85px;font-size:4.600px;color:#555">150</div>
<div class="a" style="left:568.64px;top:87.500px;width:.6px;height:4px;background:#e0e0e0"></div>
<div class="t" style="left:589.82px;top:85px;font-size:4.600px;color:#555">160</div>
<div class="a" style="left:588.32px;top:87.500px;width:.6px;height:4px;background:#e0e0e0"></div>
<div class="t" style="left:609.50px;top:85px;font-size:4.600px;color:#555">170</div>
<div class="a" style="left:608.00px;top:87.500px;width:.6px;height:4px;background:#e0e0e0"></div>
<div class="t" style="left:629.18px;top:85px;font-size:4.600px;color:#555">180</div>
<div class="a" style="left:627.68px;top:87.500px;width:.6px;height:4px;background:#e0e0e0"></div>
<div class="t" style="left:648.86px;top:85px;font-size:4.600px;color:#555">190</div>
<div class="a" style="left:647.36px;top:87.500px;width:.6px;height:4px;background:#e0e0e0"></div>
<div class="t" style="left:668.54px;top:85px;font-size:4.600px;color:#555">200</div>
<div class="a" style="left:667.04px;top:87.500px;width:.6px;height:4px;background:#e0e0e0"></div>
<div class="t" style="left:688.22px;top:85px;font-size:4.600px;color:#555">210</div>
<div class="a" style="left:686.72px;top:87.500px;width:.6px;height:4px;background:#e0e0e0"></div>
<div class="t" style="left:707.90px;top:85px;font-size:4.600px;color:#555">220</div>
<div class="a" style="left:706.40px;top:87.500px;width:.6px;height:4px;background:#e0e0e0"></div>
<div class="t" style="left:727.58px;top:85px;font-size:4.600px;color:#555">230</div>
<div class="a" style="left:726.08px;top:87.500px;width:.6px;height:4px;background:#e0e0e0"></div>
<div class="t" style="left:747.26px;top:85px;font-size:4.600px;color:#555">240</div>
<div class="a" style="left:745.76px;top:87.500px;width:.6px;height:4px;background:#e0e0e0"></div>
<div class="t" style="left:766.94px;top:85px;font-size:4.600px;color:#555">250</div>
<div class="a" style="left:765.44px;top:87.500px;width:.6px;height:4px;background:#e0e0e0"></div>
<div class="t" style="left:786.62px;top:85px;font-size:4.600px;color:#555">260</div>
<div class="a" style="left:785.12px;top:87.500px;width:.6px;height:4px;background:#e0e0e0"></div>
<div class="t" style="left:806.30px;top:85px;font-size:4.600px;color:#555">270</div>
<div class="a" style="left:804.80px;top:87.500px;width:.6px;height:4px;background:#e0e0e0"></div>
<div class="t" style="left:298.800px;top:102.5px;font-size:4.400px;color:#666;transform:rotate(-90deg);transform-origin:center;width:8px;text-align:center;margin-left:-1.200px">20</div>
<div class="t" style="left:298.800px;top:122.10000000000001px;font-size:4.400px;color:#666;transform:rotate(-90deg);transform-origin:center;width:8px;text-align:center;margin-left:-1.200px">30</div>
<div class="t" style="left:298.800px;top:141.7px;font-size:4.400px;color:#666;transform:rotate(-90deg);transform-origin:center;width:8px;text-align:center;margin-left:-1.200px">40</div>
<div class="t" style="left:298.800px;top:161.29999999999998px;font-size:4.400px;color:#666;transform:rotate(-90deg);transform-origin:center;width:8px;text-align:center;margin-left:-1.200px">50</div>
<div class="t" style="left:298.800px;top:180.89999999999998px;font-size:4.400px;color:#666;transform:rotate(-90deg);transform-origin:center;width:8px;text-align:center;margin-left:-1.200px">60</div>
<div class="t" style="left:298.800px;top:200.5px;font-size:4.400px;color:#666;transform:rotate(-90deg);transform-origin:center;width:8px;text-align:center;margin-left:-1.200px">70</div>
<div class="t" style="left:298.800px;top:220.1px;font-size:4.400px;color:#666;transform:rotate(-90deg);transform-origin:center;width:8px;text-align:center;margin-left:-1.200px">80</div>
<div class="t" style="left:298.800px;top:239.7px;font-size:4.400px;color:#666;transform:rotate(-90deg);transform-origin:center;width:8px;text-align:center;margin-left:-1.200px">90</div>
<div class="t" style="left:298.800px;top:259.3px;font-size:4.400px;color:#666;transform:rotate(-90deg);transform-origin:center;width:8px;text-align:center;margin-left:-1.200px">100</div>
<div class="t" style="left:298.800px;top:278.9px;font-size:4.400px;color:#666;transform:rotate(-90deg);transform-origin:center;width:8px;text-align:center;margin-left:-1.200px">110</div>
<div class="t" style="left:298.800px;top:298.5px;font-size:4.400px;color:#666;transform:rotate(-90deg);transform-origin:center;width:8px;text-align:center;margin-left:-1.200px">120</div>
<div class="t" style="left:298.800px;top:318.1px;font-size:4.400px;color:#666;transform:rotate(-90deg);transform-origin:center;width:8px;text-align:center;margin-left:-1.200px">130</div>
<div class="t" style="left:298.800px;top:337.7px;font-size:4.400px;color:#666;transform:rotate(-90deg);transform-origin:center;width:8px;text-align:center;margin-left:-1.200px">140</div>
<div class="t" style="left:298.800px;top:357.3px;font-size:4.400px;color:#666;transform:rotate(-90deg);transform-origin:center;width:8px;text-align:center;margin-left:-1.200px">150</div>
<div class="t" style="left:298.800px;top:376.90000000000003px;font-size:4.400px;color:#666;transform:rotate(-90deg);transform-origin:center;width:8px;text-align:center;margin-left:-1.200px">160</div>
<div class="t" style="left:298.800px;top:396.5px;font-size:4.400px;color:#666;transform:rotate(-90deg);transform-origin:center;width:8px;text-align:center;margin-left:-1.200px">170</div>
<div class="t" style="left:298.800px;top:416.1px;font-size:4.400px;color:#666;transform:rotate(-90deg);transform-origin:center;width:8px;text-align:center;margin-left:-1.200px">180</div>
<div class="t" style="left:298.800px;top:435.70000000000005px;font-size:4.400px;color:#666;transform:rotate(-90deg);transform-origin:center;width:8px;text-align:center;margin-left:-1.200px">190</div>
<div class="t" style="left:298.800px;top:455.3px;font-size:4.400px;color:#666;transform:rotate(-90deg);transform-origin:center;width:8px;text-align:center;margin-left:-1.200px">200</div>
<div class="t" style="left:298.800px;top:474.90000000000003px;font-size:4.400px;color:#666;transform:rotate(-90deg);transform-origin:center;width:8px;text-align:center;margin-left:-1.200px">210</div>
<div class="t" style="left:298.800px;top:494.5px;font-size:4.400px;color:#666;transform:rotate(-90deg);transform-origin:center;width:8px;text-align:center;margin-left:-1.200px">220</div>
<div class="a" style="left:307.500px;top:91.800px;width:520.200px;height:382.500px;background:#fff"></div>
<div class="a" style="left:307.500px;top:474.300px;width:520.200px;height:33.200px;background:#e7e7e7"></div>
<div class="a" style="left:827.700px;top:91.800px;width:6px;height:416px;background:#f0f0f0"></div>
<div class="a" style="left:828.600px;top:169px;width:4px;height:287px;background:#c4c4c4;border-radius:2px"></div>
<svg style="left:0;top:0" width="1000" height="542" viewBox="0 0 1000 542">
<defs>
<linearGradient id="plk" x1="0" y1="0" x2="0" y2="1"><stop offset="0" stop-color="#bd7429"/><stop offset=".14" stop-color="#a9591a"/><stop offset=".36" stop-color="#a6571a"/><stop offset=".6" stop-color="#b36620"/><stop offset=".85" stop-color="#b96d25"/><stop offset="1" stop-color="#b1631f"/></linearGradient>
<linearGradient id="plk2" x1="0" y1="0" x2="0" y2="1"><stop offset="0" stop-color="#ba7127"/><stop offset=".16" stop-color="#ab5c1c"/><stop offset=".4" stop-color="#a8591b"/><stop offset=".65" stop-color="#b46721"/><stop offset=".88" stop-color="#b86c24"/><stop offset="1" stop-color="#ae601d"/></linearGradient>
<pattern id="grainH" patternUnits="userSpaceOnUse" width="78.200" height="6.450"><path d="M0 1.200h30M40 1.200h25M10 2.800h45M5 4.300h20M35 4.300h40M0 5.700h50" stroke="#e08a2a" stroke-width=".5"/><path d="M20 2h40M0 3.600h35M50 3.600h28M15 5h45" stroke="#8a3c06" stroke-width=".4"/></pattern>
<pattern id="w1" patternUnits="userSpaceOnUse" x="356" y="122.14999999999999" width="78.200" height="25.800"><rect width="78.200" height="12.900" fill="url(#plk)"/><rect y="12.900" width="78.200" height="12.900" fill="url(#plk2)"/><rect x="0" y="0" width="78.200" height="25.800" fill="url(#grainH)" opacity=".10"/><path d="M0 .3h78.200M0 13.200h78.200" stroke="#6a3008" stroke-width=".5" opacity=".7"/><path d="M.3 0v12.900M39.400 12.900v12.900" stroke="#6a2803" stroke-width=".7" opacity=".9"/></pattern>
<pattern id="w2" patternUnits="userSpaceOnUse" x="733.2" y="122.14999999999999" width="78.200" height="25.800"><rect width="78.200" height="12.900" fill="url(#plk)"/><rect y="12.900" width="78.200" height="12.900" fill="url(#plk2)"/><rect x="0" y="0" width="78.200" height="25.800" fill="url(#grainH)" opacity=".10"/><path d="M0 .3h78.200M0 13.200h78.200" stroke="#6a3008" stroke-width=".5" opacity=".7"/><path d="M.3 0v12.900M39.400 12.900v12.900" stroke="#6a2803" stroke-width=".7" opacity=".9"/></pattern>
<pattern id="w3" patternUnits="userSpaceOnUse" x="355.7" y="308.35" width="78.200" height="25.800"><rect width="78.200" height="12.900" fill="url(#plk)"/><rect y="12.900" width="78.200" height="12.900" fill="url(#plk2)"/><rect x="0" y="0" width="78.200" height="25.800" fill="url(#grainH)" opacity=".10"/><path d="M0 .3h78.200M0 13.200h78.200" stroke="#6a3008" stroke-width=".5" opacity=".7"/><path d="M.3 0v12.900M39.400 12.900v12.900" stroke="#6a2803" stroke-width=".7" opacity=".9"/></pattern>
<pattern id="cream" patternUnits="userSpaceOnUse" width="26" height="22"><rect width="26" height="22" fill="#f3f0e3"/><circle cx="5" cy="4" r="1.300" fill="#ebe7d6"/><circle cx="18" cy="12" r="1.500" fill="#ece8d8"/><circle cx="9" cy="17" r="1.100" fill="#f8f6ec"/><circle cx="22" cy="3" r="1" fill="#f9f7ee"/></pattern>
<pattern id="speck" patternUnits="userSpaceOnUse" width="6" height="6"><rect width="6" height="6" fill="#e2e2e2"/><rect x="1" y="1" width="1" height="1" fill="#d2d2d2"/><rect x="4" y="3" width="1" height="1" fill="#efefef"/><rect x="2" y="4.500" width="1" height="1" fill="#d8d8d8"/><rect x="4.500" y=".3" width="1" height="1" fill="#ececec"/></pattern>
<linearGradient id="marble" x1="0" y1="0" x2="1" y2="1"><stop offset="0" stop-color="#e2e3e0"/><stop offset=".4" stop-color="#d2d5d1"/><stop offset=".7" stop-color="#e0e2de"/><stop offset="1" stop-color="#cfd2ce"/></linearGradient>
<filter id="nzD" x="0" y="0" width="100%" height="100%"><feTurbulence type="fractalNoise" baseFrequency="0.7" numOctaves="2" seed="4"/><feColorMatrix type="matrix" values="0 0 0 0 0  0 0 0 0 0  0 0 0 0 0  2.2 0 0 0 -1.0"/></filter>
<filter id="nzL" x="0" y="0" width="100%" height="100%"><feTurbulence type="fractalNoise" baseFrequency="0.7" numOctaves="2" seed="9"/><feColorMatrix type="matrix" values="0 0 0 0 1  0 0 0 0 1  0 0 0 0 1  0 2.2 0 0 -1.0"/></filter>
<filter id="grD" x="0" y="0" width="100%" height="100%"><feTurbulence type="fractalNoise" baseFrequency="0.018 0.8" numOctaves="2" seed="7"/><feColorMatrix type="matrix" values="0 0 0 0 .42  0 0 0 0 .18  0 0 0 0 .04  2.6 0 0 0 -1.15"/></filter>
<filter id="grL" x="0" y="0" width="100%" height="100%"><feTurbulence type="fractalNoise" baseFrequency="0.014 0.7" numOctaves="2" seed="13"/><feColorMatrix type="matrix" values="0 0 0 0 .82  0 0 0 0 .52  0 0 0 0 .20  0 2.6 0 0 -1.15"/></filter>
</defs>
<rect x="455" y="110" width="235" height="237" fill="#f2f0e2"/><rect x="319" y="258" width="142" height="33" fill="#f2f0e2"/>
<g opacity=".06"><rect x="455" y="110" width="235" height="237" filter="url(#nzD)"/><rect x="319" y="258" width="142" height="33" filter="url(#nzD)"/></g>
<g opacity=".22"><rect x="455" y="110" width="235" height="237" filter="url(#nzL)"/><rect x="319" y="258" width="142" height="33" filter="url(#nzL)"/></g>
<rect x="320" y="111.300" width="128" height="139" fill="url(#w1)"/>
<rect x="695" y="111.300" width="118.500" height="184.500" fill="url(#w2)"/>
<rect x="319.700" y="297.500" width="141" height="132.500" fill="url(#w3)"/>
<rect x="320" y="111.3" width="128" height="139" filter="url(#grD)" opacity=".45"/><rect x="320" y="111.3" width="128" height="139" filter="url(#grL)" opacity=".3"/>
<rect x="695" y="111.3" width="118.5" height="184.5" filter="url(#grD)" opacity=".45"/><rect x="695" y="111.3" width="118.5" height="184.5" filter="url(#grL)" opacity=".3"/>
<rect x="319.7" y="297.5" width="141" height="132.5" filter="url(#grD)" opacity=".45"/><rect x="319.7" y="297.5" width="141" height="132.5" filter="url(#grL)" opacity=".3"/>
<rect x="468" y="353.500" width="162" height="77" fill="#e3e3e3"/><rect x="686.500" y="303" width="127" height="43.500" fill="#e3e3e3"/>
<g opacity=".08"><rect x="468" y="353.500" width="162" height="77" filter="url(#nzD)"/><rect x="686.500" y="303" width="127" height="43.500" filter="url(#nzD)"/></g>
<g opacity=".4"><rect x="468" y="353.500" width="162" height="77" filter="url(#nzL)"/><rect x="686.500" y="303" width="127" height="43.500" filter="url(#nzL)"/></g>
<rect x="311.6" y="103.3" width="509.9" height="8.0" fill="#333333"/>
<rect x="311.6" y="103.3" width="8.4" height="335.0" fill="#333333"/>
<rect x="311.6" y="429.8" width="326.6" height="8.5" fill="#333333"/>
<rect x="813" y="103.3" width="8.5" height="250.3" fill="#333333"/>
<rect x="447.8" y="103.3" width="8.0" height="155.2" fill="#333333"/>
<rect x="311.6" y="250" width="144.2" height="8.5" fill="#333333"/>
<rect x="311.6" y="290" width="156.9" height="8" fill="#333333"/>
<rect x="460.5" y="290" width="8.0" height="148.3" fill="#333333"/>
<rect x="460.5" y="345.7" width="361.0" height="8.1" fill="#333333"/>
<rect x="629.8" y="345.7" width="8.4" height="92.6" fill="#333333"/>
<rect x="589.5" y="103.3" width="8.4" height="68.3" fill="#333333"/>
<rect x="589.5" y="163.9" width="105.8" height="7.7" fill="#333333"/>
<rect x="687.3" y="103.3" width="8.0" height="200.2" fill="#333333"/>
<rect x="687.3" y="295.7" width="134.2" height="7.8" fill="#333333"/>
<rect x="523" y="204.2" width="172.3" height="7.8" fill="#333333"/>
<rect x="523" y="204.2" width="7.8" height="110.5" fill="#333333"/>
<path d="M311.600 103.300l8.400 8M821.500 103.300l-8.500 8M813 345.500l8.500 8M460.500 290l8 8M523 204.200l7.800 7.800M687.300 303.500l8-7.800" stroke="#4a4a4a" stroke-width=".6"/>
<rect x="311.6" y="171" width="8.4" height="52" fill="#c9c9c9"/>
<rect x="314" y="171" width="3.5" height="52" fill="#f2f2f2"/>
<rect x="311.6" y="320.5" width="8.4" height="31.8" fill="#c9c9c9"/>
<rect x="314" y="320.5" width="3.5" height="31.8" fill="#f2f2f2"/>
<rect x="727.7" y="103.3" width="72.6" height="8.0" fill="#f4f4f4"/>
<path d="M727.700 105.300h72.600M727.700 107.300h72.600M727.700 109.300h72.600" stroke="#bdbdbd" stroke-width=".6"/>
<rect x="391.2" y="429.8" width="62.8" height="8.5" fill="#f6f6f6"/>
<path d="M393 432h59M393 434h59" stroke="#999" stroke-width=".5"/><rect x="450.500" y="431.500" width="2" height="4" fill="#222"/><circle cx="394" cy="433" r="1" fill="none" stroke="#666" stroke-width=".4"/>
<rect x="417.6" y="250" width="27.9" height="8.5" fill="#f5dfc8" stroke="#c08a6a" stroke-width=".6"/>
<rect x="440.800" y="228" width="1.800" height="22" fill="#f5dfc8" stroke="#c08a6a" stroke-width=".4"/>
<path d="M419 250v8.500M444 250v8.500" stroke="#c08a6a" stroke-width=".5"/>
<rect x="430.5" y="290" width="28.2" height="8" fill="#f5dfc8" stroke="#c08a6a" stroke-width=".6"/>
<rect x="453.300" y="298" width="1.800" height="21.500" fill="#f5dfc8" stroke="#c08a6a" stroke-width=".4"/>
<path d="M432 290v8M457 290v8" stroke="#c08a6a" stroke-width=".5"/>
<rect x="589.5" y="113.2" width="8.4" height="28.8" fill="#f5dfc8" stroke="#c08a6a" stroke-width=".6"/>
<rect x="597.900" y="115.300" width="23.600" height="2.800" fill="#f5dfc8" stroke="#c08a6a" stroke-width=".4"/><path d="M621.500 118.100a23.600 23.500 0 0 1-23.600 23.500" stroke="#c08a6a" stroke-width=".6" fill="none"/>
<rect x="687.3" y="173.5" width="8.0" height="28.9" fill="#f5dfc8" stroke="#c08a6a" stroke-width=".6"/>
<rect x="695.300" y="177" width="23" height="1.600" fill="#d8d0cc" stroke="#a89a94" stroke-width=".3"/>
<rect x="725" y="346" width="57.7" height="7.8" fill="#f5dfc8" stroke="#c08a6a" stroke-width=".6"/>
<path d="M727.300 346v-26.500h2.200v26.500M778 346v-26.500h2.200v26.500" stroke="#c08a6a" stroke-width=".6" fill="#f5dfc8"/>
<path d="M729.500 319.500a25 26.500 0 0 1 24.300 26.500M778 319.500a25 26.500 0 0 0-24.200 26.500" stroke="#c08a6a" stroke-width=".6" fill="none"/>
<rect x="475.500" y="314.800" width="48.700" height="30.400" fill="#fbdcb4" stroke="#e5a566" stroke-width=".5"/>
<path d="M482.7 314.800v30.400" stroke="#e5a566" stroke-width=".6"/>
<path d="M489.6 314.800v30.400" stroke="#e5a566" stroke-width=".6"/>
<path d="M496.5 314.800v30.400" stroke="#e5a566" stroke-width=".6"/>
<path d="M502.8 314.800v30.400" stroke="#e5a566" stroke-width=".6"/>
<path d="M509.7 314.800v30.400" stroke="#e5a566" stroke-width=".6"/>
<path d="M516.6 314.800v30.400" stroke="#e5a566" stroke-width=".6"/>
<rect x="468.800" y="315.500" width="61.700" height="2.600" rx="1.300" fill="#fbdcb4" stroke="#e5a566" stroke-width=".5"/><rect x="468.800" y="341.900" width="61.700" height="2.600" rx="1.300" fill="#fbdcb4" stroke="#e5a566" stroke-width=".5"/>
<path d="M473 327.500h8v-2.300l4.700 4.800-4.700 4.800v-2.300h-8z" fill="#fbdcb4" stroke="#e5a566" stroke-width=".5"/>
<path d="M525.600 318.200v23.600" stroke="#999" stroke-width=".5"/>
<rect x="320" y="112.300" width="58.700" height="23.200" fill="#f1dbe4" stroke="#b08a94" stroke-width=".7"/><rect x="321.500" y="113.800" width="55.700" height="20.200" fill="none" stroke="#b89aa2" stroke-width=".5"/><path d="M321.500 123.700h55.700" stroke="#b08a8e" stroke-width=".9"/>
<path d="M325.3 115.300c2.5 .3 3.5 3.500 4 8.400c0.3 2.500 1.8 4 1.3 6.500c-0.4 2.200 -3.3 2.200 -3.6 0c-0.3-2.500 1-4 1-6.500c-0.2-3.500 -1.3-6 -2.7-8.400z" fill="none" stroke="#a87880" stroke-width=".55"/>
<path d="M333.5 115.300c2.5 .3 3.5 3.500 4 8.400c0.3 2.500 1.8 4 1.3 6.500c-0.4 2.200 -3.3 2.200 -3.6 0c-0.3-2.500 1-4 1-6.500c-0.2-3.500 -1.3-6 -2.7-8.400z" fill="none" stroke="#a87880" stroke-width=".55"/>
<path d="M346.8 115.300c-2.5 .3 -3.5 3.500 0.45 8.400c-0.3 2.500 -1.8 4 -1.3 6.500c0.4 2.200 3.3 2.200 3.6 0c0.3-2.500 -1-4 -1-6.500c0.2-3.500 1.3-6 -0.3-8.400z" fill="none" stroke="#a87880" stroke-width=".55"/>
<path d="M364.0 115.300c-2.5 .3 -3.5 3.500 -1.35 8.400c-0.3 2.500 -1.8 4 -1.3 6.500c0.4 2.200 3.3 2.200 3.6 0c0.3-2.500 -1-4 -1-6.500c0.2-3.500 1.3-6 0.8999999999999999-8.400z" fill="none" stroke="#a87880" stroke-width=".55"/>
<path d="M365 115.300c2.5 .3 3.5 3.500 6.3 8.400c0.3 2.500 1.8 4 1.3 6.500c-0.4 2.200 -3.3 2.200 -3.6 0c-0.3-2.500 1-4 1-6.500c-0.2-3.500 -1.3-6 -4.2-8.400z" fill="none" stroke="#a87880" stroke-width=".55"/>
<rect x="432.300" y="111.700" width="14.600" height="59" fill="#f1dbe4" stroke="#c898a8" stroke-width=".6"/>
<path d="M432.300 111.7l14.600 14.750M446.900 111.7l-14.600 14.750M432.300 126.45h14.600" stroke="#c898a8" stroke-width=".5"/>
<path d="M432.300 126.45l14.600 14.750M446.900 126.45l-14.600 14.750M432.300 141.2h14.600" stroke="#c898a8" stroke-width=".5"/>
<path d="M432.300 141.2l14.600 14.750M446.900 141.2l-14.600 14.750M432.300 155.95h14.600" stroke="#c898a8" stroke-width=".5"/>
<path d="M432.300 155.95l14.600 14.750M446.900 155.95l-14.600 14.750M432.300 170.7h14.600" stroke="#c898a8" stroke-width=".5"/>
<polygon points="396.1,221.1 387.0,237.0 371.1,246.1 352.9,246.1 337.0,237.0 327.9,221.1 327.9,202.9 337.0,187.0 352.9,177.9 371.1,177.9 387.0,187.0 396.1,202.9" fill="#f09292" stroke="#c86a6a" stroke-width=".7"/>
<path d="M341 194a24 24 0 0 1 42 0" fill="none" stroke="#a85a5a" stroke-width=".6"/>
<path d="M333 231l22-17.500 32 17.500M338 229l17-13 20 3 8 9" fill="none" stroke="#a85a5a" stroke-width=".6"/>
<path d="M344 229.500l6.500-1.500 1.500 8-6.500 1.500z" fill="none" stroke="#a85a5a" stroke-width=".6"/>
<path d="M352.5 229.500l6.500-1.500 1.500 8-6.500 1.500z" fill="none" stroke="#a85a5a" stroke-width=".6"/>
<path d="M361 229.500l6.500-1.500 1.500 8-6.500 1.500z" fill="none" stroke="#a85a5a" stroke-width=".6"/>
<path d="M369.5 229.500l6.500-1.500 1.500 8-6.500 1.500z" fill="none" stroke="#a85a5a" stroke-width=".6"/>
<circle cx="329.700" cy="227.500" r="1.700" fill="#1a8cf0"/>
<path d="M491.200 114.500a3 3 0 0 1 3-3h58.700a3 3 0 0 1 3 3v26.200l-3.900-3.200l-9.600 2.400l-9.600-2.400l-9.550 2.400l-9.550-2.400l-9.150 2.400l-9.150-2.400l-4.200 3.200z" fill="#b47161" stroke="#7c463a" stroke-width=".6" stroke-linejoin="round"/>
<path d="M495.400 137.500v-19M513.700 137.500v-19M532.800 137.500v-19M552 137.500v-19" fill="none" stroke="#7c463a" stroke-width=".55"/>
<rect x="495.9" y="115.800" width="17.3" height="5.800" rx="2.500" fill="none" stroke="#7c463a" stroke-width=".55"/>
<rect x="514.2" y="115.800" width="18.1" height="5.800" rx="2.500" fill="none" stroke="#7c463a" stroke-width=".55"/>
<rect x="533.3" y="115.800" width="18.2" height="5.800" rx="2.500" fill="none" stroke="#7c463a" stroke-width=".55"/>
<rect x="456.200" y="141.300" width="28.800" height="28.500" fill="#b47161" stroke="#7c463a" stroke-width=".6"/><path d="M463 144.400h22M463 166.800h22M463 144.400v22.400" fill="none" stroke="#7c463a" stroke-width=".55"/><rect x="458.300" y="145" width="4.700" height="21.500" rx="2" fill="none" stroke="#7c463a" stroke-width=".55"/>
<rect x="505.100" y="144.900" width="37.900" height="21" fill="#d96a29" stroke="#b4501a" stroke-width=".5"/><path d="M507.600 144.900v21M540.500 144.900v21" stroke="#b4501a" stroke-width=".5"/><path d="M505.100 144.900h2.500M540.500 144.900h2.500M505.100 165.900h2.500M540.500 165.900h2.500" stroke="#ee8a4a" stroke-width=".8"/>
<rect x="635.800" y="111" width="51.500" height="25.500" fill="url(#marble)" stroke="#9a9a9a" stroke-width=".8"/><rect x="639.500" y="113.500" width="45" height="20.500" fill="none" stroke="#b4b6b2" stroke-width=".7"/><path d="M639.500 123.500h3M644.500 123.500a1.500 1.200 0 1 0 3 0a1.500 1.200 0 1 0-3 0" stroke="#777" stroke-width=".4" fill="none"/>
<rect x="599" y="147.200" width="25.700" height="15.800" fill="#cfe5f3" stroke="#8ab0cc" stroke-width=".6"/><ellipse cx="611" cy="154.300" rx="10" ry="5.600" fill="#e4f1f9" stroke="#8aa8c0" stroke-width=".5"/><path d="M611 155.500v7M609.500 162h3.500" stroke="#7a98b0" stroke-width=".6"/><circle cx="611" cy="153.500" r=".6" fill="none" stroke="#8aa8c0" stroke-width=".3"/>
<rect x="679.500" y="145.500" width="7.800" height="15" rx="1.500" fill="#cde6f7" stroke="#7a9cc0" stroke-width=".6"/><ellipse cx="671.800" cy="153" rx="8" ry="6.500" fill="#d7ecfa" stroke="#7a9cc0" stroke-width=".6"/><path d="M678.800 149.500q-1.200 3.500 0 7" stroke="#5a7ca0" stroke-width=".5" fill="none"/>
<path d="M590.0 240.2A45.5 45.5 0 1 1 590.0 278.6L610.3 271.0A23.9 23.9 0 1 0 610.3 247.8z" fill="#a9bde2" stroke="#46567c" stroke-width=".6" stroke-linejoin="round"/>
<path d="M631.2 235.5L631.2 213.9" stroke="#46567c" stroke-width=".5"/>
<path d="M648.4 242.8L663.9 227.8" stroke="#46567c" stroke-width=".5"/>
<path d="M655.1 259.4L676.7 259.4" stroke="#46567c" stroke-width=".5"/>
<path d="M648.4 276.0L663.9 291.0" stroke="#46567c" stroke-width=".5"/>
<path d="M631.2 283.3L631.2 304.9" stroke="#46567c" stroke-width=".5"/>
<path d="M591.7 238.4A44.7 44.7 0 0 1 629.6 214.7L629.8 219.4A40.0 40.0 0 0 0 595.9 240.6z" fill="none" stroke="#46567c" stroke-width=".45" stroke-linejoin="round"/>
<path d="M632.8 214.7A44.7 44.7 0 0 1 662.3 227.2L659.0 230.6A40.0 40.0 0 0 0 632.6 219.4z" fill="none" stroke="#46567c" stroke-width=".45" stroke-linejoin="round"/>
<path d="M664.4 229.5A44.7 44.7 0 0 1 675.9 257.8L671.2 258.0A40.0 40.0 0 0 0 660.9 232.6z" fill="none" stroke="#46567c" stroke-width=".45" stroke-linejoin="round"/>
<path d="M675.9 261.0A44.7 44.7 0 0 1 664.4 289.3L660.9 286.2A40.0 40.0 0 0 0 671.2 260.8z" fill="none" stroke="#46567c" stroke-width=".45" stroke-linejoin="round"/>
<path d="M662.3 291.6A44.7 44.7 0 0 1 632.8 304.1L632.6 299.4A40.0 40.0 0 0 0 659.0 288.2z" fill="none" stroke="#46567c" stroke-width=".45" stroke-linejoin="round"/>
<path d="M629.6 304.1A44.7 44.7 0 0 1 591.7 280.4L595.9 278.2A40.0 40.0 0 0 0 629.8 299.4z" fill="none" stroke="#46567c" stroke-width=".45" stroke-linejoin="round"/>
<ellipse cx="618.9" cy="227.4" rx="9" ry="2.600" transform="rotate(-21 618.9 227.4)" fill="#c3d2ec" stroke="#46567c" stroke-width=".45"/>
<ellipse cx="618.9" cy="227.4" rx="6.500" ry="1.300" transform="rotate(-21 618.9 227.4)" fill="none" stroke="#7a8ab0" stroke-width=".35" stroke-dasharray=".8 .6"/>
<ellipse cx="644.6" cy="227.8" rx="9" ry="2.600" transform="rotate(23 644.6 227.8)" fill="#c3d2ec" stroke="#46567c" stroke-width=".45"/>
<ellipse cx="644.6" cy="227.8" rx="6.500" ry="1.300" transform="rotate(23 644.6 227.8)" fill="none" stroke="#7a8ab0" stroke-width=".35" stroke-dasharray=".8 .6"/>
<ellipse cx="663.2" cy="247.1" rx="9" ry="2.600" transform="rotate(69 663.2 247.1)" fill="#c3d2ec" stroke="#46567c" stroke-width=".45"/>
<ellipse cx="663.2" cy="247.1" rx="6.500" ry="1.300" transform="rotate(69 663.2 247.1)" fill="none" stroke="#7a8ab0" stroke-width=".35" stroke-dasharray=".8 .6"/>
<ellipse cx="663.2" cy="271.7" rx="9" ry="2.600" transform="rotate(111 663.2 271.7)" fill="#c3d2ec" stroke="#46567c" stroke-width=".45"/>
<ellipse cx="663.2" cy="271.7" rx="6.500" ry="1.300" transform="rotate(111 663.2 271.7)" fill="none" stroke="#7a8ab0" stroke-width=".35" stroke-dasharray=".8 .6"/>
<ellipse cx="644.6" cy="291.0" rx="9" ry="2.600" transform="rotate(157 644.6 291.0)" fill="#c3d2ec" stroke="#46567c" stroke-width=".45"/>
<ellipse cx="644.6" cy="291.0" rx="6.500" ry="1.300" transform="rotate(157 644.6 291.0)" fill="none" stroke="#7a8ab0" stroke-width=".35" stroke-dasharray=".8 .6"/>
<ellipse cx="618.9" cy="291.4" rx="9" ry="2.600" transform="rotate(201 618.9 291.4)" fill="#c3d2ec" stroke="#46567c" stroke-width=".45"/>
<ellipse cx="618.9" cy="291.4" rx="6.500" ry="1.300" transform="rotate(201 618.9 291.4)" fill="none" stroke="#7a8ab0" stroke-width=".35" stroke-dasharray=".8 .6"/>
<circle cx="631.2" cy="259.4" r="11.200" fill="#a9bde2" stroke="#46567c" stroke-width=".6"/>
<rect x="700" y="115" width="7.600" height="9.600" fill="#cfe8d4" stroke="#8cc878" stroke-width=".6"/>
<path d="M720.8 137v-16.500a5 5 0 0 1 5-5h13a5 5 0 0 1 5 5v16.500a2 2 0 0 1-2 2h-19a2 2 0 0 1-2-2z" fill="#f0cf9b" stroke="#d4a674" stroke-width=".5"/>
<path d="M718.4 137q2.400-1 2.400-4M746.1999999999999 137q-2.400-1-2.400-4M723.4 117.500q8.900 4 17.800 0M721.9 122q10.400 3.500 20.800 0" fill="none" stroke="#d4a674" stroke-width=".45"/>
<path d="M771.0 137v-16.500a5 5 0 0 1 5-5h13a5 5 0 0 1 5 5v16.500a2 2 0 0 1-2 2h-19a2 2 0 0 1-2-2z" fill="#f0cf9b" stroke="#d4a674" stroke-width=".5"/>
<path d="M768.6 137q2.400-1 2.400-4M796.4 137q-2.400-1-2.400-4M773.6 117.500q8.900 4 17.800 0M772.1 122q10.400 3.500 20.800 0" fill="none" stroke="#d4a674" stroke-width=".45"/>
<rect x="750.900" y="119.800" width="13" height="14.600" fill="#f0cf9b" stroke="#d4a674" stroke-width=".5"/>
<rect x="704.400" y="220" width="70.200" height="66" fill="#fdeccd" stroke="#e8cfa0" stroke-width=".5"/><path d="M730.500 220v9" stroke="#c49a62" stroke-width=".5"/>
<path d="M708.500 222l6.500-1.500 3.500 3.500-2 4.500-6.500 1z" fill="#b07a6a" stroke="#8a5a4e" stroke-width=".4"/>
<rect x="695.500" y="229" width="74.300" height="56.500" rx="2.500" fill="#ba8269" stroke="#8e5a48" stroke-width=".7"/>
<path d="M722.500 229v56.500M748.500 229v56.500" stroke="#8e5a48" stroke-width=".6"/>
<path d="M722.500 237.5h26" stroke="#8e5a48" stroke-width=".5"/>
<path d="M722.500 245h26" stroke="#8e5a48" stroke-width=".5"/>
<path d="M722.500 252.5h26" stroke="#8e5a48" stroke-width=".5"/>
<path d="M722.500 260h26" stroke="#8e5a48" stroke-width=".5"/>
<path d="M722.500 267.5h26" stroke="#8e5a48" stroke-width=".5"/>
<path d="M722.500 275h26" stroke="#8e5a48" stroke-width=".5"/>
<rect x="704.500" y="231.500" width="12.500" height="23" rx="1.500" fill="none" stroke="#8e5a48" stroke-width=".6"/><rect x="704.500" y="259.500" width="12.500" height="23" rx="1.500" fill="none" stroke="#8e5a48" stroke-width=".6"/>
<path d="M698.500 230.500q3 13 0 27q3 13 0 26.500M704.500 231v53" stroke="#8e5a48" stroke-width=".5" fill="none"/>
<path d="M706 239h9.500" stroke="#8e5a48" stroke-width=".4"/>
<path d="M706 246.5h9.500" stroke="#8e5a48" stroke-width=".4"/>
<path d="M706 267h9.500" stroke="#8e5a48" stroke-width=".4"/>
<path d="M706 274.5h9.500" stroke="#8e5a48" stroke-width=".4"/>
<rect x="798.800" y="221.300" width="13.800" height="59.400" fill="#e9c08c" stroke="#b08a62" stroke-width=".6"/>
<path d="M798.800 221.3l13.800 14.850M812.600 221.3l-13.800 14.850M798.800 236.15h13.800" stroke="#b08a62" stroke-width=".5"/>
<path d="M798.800 236.15l13.800 14.850M812.600 236.15l-13.800 14.850M798.800 251.0h13.800" stroke="#b08a62" stroke-width=".5"/>
<path d="M798.800 251.0l13.800 14.850M812.600 251.0l-13.800 14.850M798.800 265.85h13.800" stroke="#b08a62" stroke-width=".5"/>
<path d="M798.800 265.85l13.800 14.850M812.600 265.85l-13.800 14.850M798.800 280.70000000000005h13.800" stroke="#b08a62" stroke-width=".5"/>
<rect x="319.900" y="299" width="87.500" height="16" fill="#cfe6f5" stroke="#7ab0d0" stroke-width=".7"/><rect x="322" y="301" width="83.300" height="12" fill="none" stroke="#9ac4de" stroke-width=".5"/>
<rect x="321" y="360" width="34.500" height="68.500" fill="#9dd5f1" stroke="#63a4cf" stroke-width=".7"/>
<path d="M321 372h34.500" stroke="#63a4cf" stroke-width=".5"/>
<path d="M321 384h34.500" stroke="#63a4cf" stroke-width=".5"/>
<path d="M321 396.5h34.500" stroke="#63a4cf" stroke-width=".5"/>
<path d="M321 409h34.500" stroke="#63a4cf" stroke-width=".5"/>
<rect x="319.3" y="358.8" width="4.800" height="4.800" fill="#8ccaec" stroke="#63a4cf" stroke-width=".5"/>
<rect x="352.5" y="358.8" width="4.800" height="4.800" fill="#8ccaec" stroke="#63a4cf" stroke-width=".5"/>
<rect x="319.3" y="424.8" width="4.800" height="4.800" fill="#8ccaec" stroke="#63a4cf" stroke-width=".5"/>
<rect x="352.5" y="424.8" width="4.800" height="4.800" fill="#8ccaec" stroke="#63a4cf" stroke-width=".5"/>
<rect x="326.600" y="412.700" width="22.200" height="12" rx="1.500" fill="#a9dcf5" stroke="#63a4cf" stroke-width=".6"/>
<path d="M356 368.500h6.500v20.700h-6.500" fill="#b5e0f6" stroke="#63a4cf" stroke-width=".7"/><path d="M358 371v16M360.300 371v16" stroke="#63a4cf" stroke-width=".5"/>
<rect x="401.400" y="402.200" width="50.500" height="25.600" fill="#f1a239" stroke="#b06a14" stroke-width=".7"/>
<circle cx="444.100" cy="418" r="4.600" fill="none" stroke="#7a4a10" stroke-width=".6"/><circle cx="444.100" cy="418" r="2.400" fill="none" stroke="#7a4a10" stroke-width=".6"/><path d="M444.100 412.500v2.500M444.100 421v2.500M438.600 418h2.500M447.100 418h2.500" stroke="#7a4a10" stroke-width=".6"/>
<path d="M421 391.500h10.500l.8 11h-4v1.500h-4v-1.500h-4z" fill="none" stroke="#7a3a18" stroke-width=".6"/>
<path d="M517 367.900h72c6.500 0 10.100 4 10.100 10v23.900c0 6-3.600 10-10.100 10h-72c-11 0-17.700-8-17.700-21.950s6.700-21.950 17.700-21.950z" fill="#fbd36e" stroke="#d79a3c" stroke-width=".7"/>
<path d="M534.600 371.800c-20 2-20 34.200 0 36.200l7.100-7.800c-1.200-7-1.200-13.700 0-20.700z" fill="none" stroke="#d79a3c" stroke-width=".6"/>
<rect x="542.300" y="378.200" width="22" height="23.300" fill="none" stroke="#d79a3c" stroke-width=".6"/><path d="M542.300 386h22M542.300 393.700h22" stroke="#d79a3c" stroke-width=".6"/>
<path d="M564.900 377.600l24.600 3.200c1.200 6 1.200 12.100 0 18.100l-24.600 3.200c1.300-8 1.300-16.500 0-24.500z" fill="none" stroke="#d79a3c" stroke-width=".6"/>
<path d="M534.600 371.800l35.500 2.600 19.400 6.400M534.600 408l35.500-2.600 19.400-6.400M541.700 379.500l28.400-5.100M541.700 400.200l28.400 5.100M567 369.500l23 9.500M567 410.200l23-9.500M590.700 371.500c5 9 5 28 0 36.800M594.500 373c3.500 9 3.500 25 0 33.800M589.500 380.800l6-1.500M589.500 398.900l6 1.500" fill="none" stroke="#d79a3c" stroke-width=".55"/>
<path d="M503.500 376l6-4.500M503.500 403.700l6 4.500M501.500 389.500h1" stroke="#d79a3c" stroke-width=".6" fill="none"/>
<path d="M534.500 368.500l4-5.200c1-.6 2 0 1.500 1.200l-2.200 4.500zM534.500 411.300l4 5.200c1 .6 2 0 1.500-1.200l-2.200-4.500z" fill="#fbd36e" stroke="#d79a3c" stroke-width=".55"/>
<path d="M311.600 453h151.800M463.400 453h173.500M311.600 448.400v13.200M463.400 448.400v13.200M636.900 448.400v13.200" stroke="#222" stroke-width=".7" fill="none"/>
<path d="M311.600 453l3.500-1.200v2.400zM463.400 453l-3.500-1.200v2.400zM463.400 453l3.500-1.200v2.400zM636.900 453l-3.500-1.200v2.400z" fill="#222"/>
<text x="387.300" y="448.400" font-size="5.650" font-family="Liberation Sans" fill="#333" text-anchor="middle">3876.6mm</text>
<text x="549.900" y="448.400" font-size="5.650" font-family="Liberation Sans" fill="#333" text-anchor="middle">4596.9mm</text>
<path d="M651.400 354v83.500M645 354h13M645 437.500h13" stroke="#222" stroke-width=".7" fill="none"/><path d="M651.400 354l-1.200 3.500h2.400zM651.400 437.500l-1.200-3.500h2.400z" fill="#222"/>
<text transform="translate(646.300 395.600) rotate(-90)" font-size="6.100" font-family="Liberation Sans" fill="#333" text-anchor="middle">2112mm</text>
<text transform="translate(827.400 229) rotate(-90)" font-size="5.800" font-family="Liberation Sans" fill="#555" text-anchor="middle">6292.6mm</text>
<path d="M311.600 92.300v7.200M450.600 92.300v7.200M691.200 92.300v7.200M821.500 92.300v7.200M311.600 92.500h3M447.600 92.500h6M688.200 92.500h6M818.500 92.500h3" stroke="#222" stroke-width=".8" fill="none"/><path d="M311.600 92.300h510" stroke="#555" stroke-width=".6"/>
</svg>
<div class="a" style="left:834px;top:69px;width:19px;height:454px;background:#f5f5f5"></div>
<svg style="left:839.700px;top:74px" width="7" height="6" viewBox="0 0 7 6"><path d="M1 .5L3.200 3 1 5.500M4 .5L6.200 3 4 5.500" stroke="#777" stroke-width=".8" fill="none"/></svg>
<div class="a" style="left:834px;top:108.500px;width:18.500px;height:19.500px;background:#0d72e7"></div>
<svg style="left:838px;top:89.5px" width="10" height="10" viewBox="0 0 8.500 8.500"><path d="M4 .8L.8 4l3.200 3.200L7.200 4zM.8 4h6.400" stroke="#222" stroke-width=".9" fill="none"/><path d="M.8 4h6.400L4 7.200z" fill="#222"/><path d="M7.700 5.800l.7 1.300a.7.700 0 0 1-1.400 0z" fill="#222"/></svg>
<svg style="left:838px;top:113.5px" width="10" height="10" viewBox="0 0 8.500 8.500"><rect x=".9" y=".6" width="2.800" height="3.200" rx=".8" stroke="#fff" stroke-width=".9" fill="none"/><rect x="4.800" y=".6" width="2.800" height="3.200" rx=".8" stroke="#fff" stroke-width=".9" fill="none"/><rect x=".9" y="4.700" width="2.800" height="3.200" rx=".8" stroke="#fff" stroke-width=".9" fill="none"/><rect x="4.800" y="4.700" width="2.800" height="3.200" rx=".8" stroke="#fff" stroke-width=".9" fill="none"/></svg>
<svg style="left:838px;top:137px" width="10" height="10" viewBox="0 0 8.500 8.500"><rect x=".8" y="1.300" width="6.800" height="5.500" stroke="#222" stroke-width=".9" fill="none"/><path d="M1.500 6l2-2 1.200 1 1-1 1.300 1.500v.5z" fill="#222"/></svg>
<svg style="left:838px;top:160.5px" width="10" height="10" viewBox="0 0 8.500 8.500"><path d="M4.200 1L1 2.800l3.200 1.800 3.200-1.800zM1 4.500l3.200 1.800 3.200-1.800" stroke="#222" stroke-width=".9" fill="none"/></svg>
<svg style="left:838px;top:184px" width="10" height="10" viewBox="0 0 8.500 8.500"><path d="M1.500 1h5.300v6.500H1.500zM3 3h2.500M3 4.500h2.500M3 6h2.500" stroke="#222" stroke-width=".9" fill="none"/></svg>
<svg style="left:838px;top:207.5px" width="10" height="10" viewBox="0 0 8.500 8.500"><path d="M1.200 1.500h3v2h2.800v4H1.200zM2.500 3.500v1M2.500 5.500v1M5.300 4.800v1" stroke="#222" stroke-width=".9" fill="none"/></svg>
<svg style="left:838px;top:231px" width="10" height="10" viewBox="0 0 8.500 8.500"><path d="M1 1l2 2M7.500 1l-2 2M1 7.500l2-2M7.500 7.500l-2-2M1 2.500V1h1.500M6 1h1.500v1.500M1 6v1.500h1.500M7.500 6v1.500H6M3.500 4.300h1.500" stroke="#222" stroke-width=".9" fill="none"/></svg>
<svg style="left:838px;top:254.5px" width="10" height="10" viewBox="0 0 8.500 8.500"><path d="M.8 1.200h6.900M1.300 1.200v4.500h5.900V1.200M3 7.500l1.200-1.800L5.500 7.500" stroke="#222" stroke-width=".9" fill="none"/><path d="M3.500 2.300v2.200l2-1.100z" fill="#222"/></svg>
<svg style="left:838px;top:278px" width="10" height="10" viewBox="0 0 8.500 8.500"><path d="M1.800 2.300A3.200 3.200 0 1 1 1 4.300M1 1.500v1.500h1.500M4.200 2.500v2l1.300.8" stroke="#222" stroke-width=".9" fill="none"/></svg>
<div class="a" style="left:853px;top:69px;width:147px;height:454px;background:#f5f5f5"></div>
<div class="a" style="left:853px;top:69px;width:147px;height:16.500px;background:#e0e0e0"></div>
<div class="t" style="left:853px;width:147px;text-align:center;top:74.500px;font-size:7px;font-weight:bold;color:#111">Theme</div>
<div class="a" style="left:993.500px;top:86px;width:4px;height:437px;background:#ebebeb"></div>
<div class="a" style="left:994px;top:87px;width:3px;height:238px;background:#d6d6d6;border-radius:1.500px"></div>
<div class="a" style="left:861.500px;top:94px;width:67px;height:66.500px;background:#fff;border:1px solid #ececec"></div>
<div class="a" style="left:941.7px;top:97.5px;width:2.500px;height:2.300px;background:#4a5fb0"></div>
<div class="a" style="left:944.6px;top:97.5px;width:2.500px;height:2.300px;background:#3aa07a"></div>
<div class="a" style="left:947.5px;top:97.5px;width:2.500px;height:2.300px;background:#e05a3a"></div>
<div class="a" style="left:941.7px;top:100.2px;width:2.500px;height:2.300px;background:#3a8ad8"></div>
<div class="a" style="left:944.6px;top:100.2px;width:2.500px;height:2.300px;background:#7a5ab0"></div>
<div class="a" style="left:947.5px;top:100.2px;width:2.500px;height:2.300px;background:#e0a03a"></div>
<div class="a" style="left:941.7px;top:102.9px;width:2.500px;height:2.300px;background:#d84a4a"></div>
<div class="a" style="left:944.6px;top:102.9px;width:2.500px;height:2.300px;background:#4a9a4a"></div>
<div class="a" style="left:947.5px;top:102.9px;width:2.500px;height:2.300px;background:#777"></div>
<div class="t" style="left:940.300px;top:114px;font-size:9.300px;color:#222">Aa</div>
<div class="t" style="left:958px;top:116px;font-size:6.700px;color:#333;transform:scaleX(.9);transform-origin:left center">Times Ne...</div>
<svg style="left:940.500px;top:131.500px" width="11" height="9" viewBox="0 0 11 9"><path d="M1 1.500h3v5.500h5M8 5.800l1.300 1.200L8 8.200" stroke="#222" stroke-width=".9" fill="none"/><circle cx="1" cy="1.500" r=".8" fill="#222"/></svg>
<svg style="left:941.500px;top:148px" width="9" height="9" viewBox="0 0 9 9"><path d="M1 1h5.800l1.200 1.200V8H1zM2.800 1v2.500h3V1" stroke="#222" stroke-width=".9" fill="none"/></svg>
<div class="t" style="left:958px;top:149.400px;font-size:6.700px;color:#333;transform:scaleX(.9);transform-origin:left center">Save The...</div>
<div class="a" style="left:893px;top:168.500px;width:31.500px;height:30.500px;background:#e0e0e0"></div>
<svg style="left:872px;top:171.500px" width="10" height="10" viewBox="0 0 10 10"><rect x="1" y="1" width="3" height="3" stroke="#222" stroke-width=".9" fill="none"/><rect x="6" y="1" width="3" height="3" rx="1" stroke="#222" stroke-width=".9" fill="none"/><rect x="1" y="6" width="3" height="3" stroke="#222" stroke-width=".9" fill="none"/><rect x="6" y="6" width="3" height="3" stroke="#222" stroke-width=".9" fill="none"/></svg>
<svg style="left:904px;top:171.500px" width="10" height="10" viewBox="0 0 10 10"><rect x=".8" y="1" width="8.500" height="8" stroke="#222" stroke-width=".9" fill="none"/><path d="M.8 3h8.500" stroke="#222" stroke-width="1.200"/><path d="M3.600 3v6M6.400 3v6M.8 6h8.500" stroke="#666" stroke-width=".5"/></svg>
<svg style="left:935.500px;top:172px" width="11" height="9" viewBox="0 0 11 9"><path d="M1 1.500h3v5.500h5M8 5.800l1.300 1.200L8 8.200" stroke="#222" stroke-width=".9" fill="none"/><circle cx="1" cy="1.500" r=".8" fill="#222"/></svg>
<div class="t" style="left:967px;top:172px;font-size:9px;color:#222">Aa</div>
<div class="t" style="left:856.5px;width:40px;text-align:center;top:188px;font-size:6.400px;color:#222">Theme</div>
<div class="t" style="left:889px;width:40px;text-align:center;top:188px;font-size:6.400px;color:#222">Color</div>
<div class="t" style="left:921px;width:40px;text-align:center;top:188px;font-size:6.400px;color:#222">Connector</div>
<div class="t" style="left:952.8px;width:40px;text-align:center;top:188px;font-size:6.400px;color:#222">Text</div>
<div class="a" style="left:861.500px;top:207px;width:127px;height:14.500px;border:1px dashed #aaa"></div>
<svg style="left:920.500px;top:210px" width="9" height="9" viewBox="0 0 9 9"><path d="M4.500 .5v8M.5 4.500h8" stroke="#222" stroke-width=".9"/></svg>
<div class="a" style="left:860.5px;top:235.4px;width:8.350px;height:8px;background:#4dd9c0"></div>
<div class="a" style="left:868.85px;top:235.4px;width:8.350px;height:8px;background:#4a7fe8"></div>
<div class="a" style="left:877.2px;top:235.4px;width:8.350px;height:8px;background:#3a4fc4"></div>
<div class="a" style="left:885.55px;top:235.4px;width:8.350px;height:8px;background:#f78080"></div>
<div class="a" style="left:893.9px;top:235.4px;width:8.350px;height:8px;background:#fbc84a"></div>
<div class="a" style="left:902.25px;top:235.4px;width:8.350px;height:8px;background:#8fc4f5"></div>
<div class="a" style="left:910.6px;top:235.4px;width:8.350px;height:8px;background:#7f9af5"></div>
<div class="a" style="left:918.95px;top:235.4px;width:8.350px;height:8px;background:#fb9a1e"></div>
<div class="a" style="left:927.3px;top:235.4px;width:8.350px;height:8px;background:#f56060"></div>
<div class="a" style="left:935.65px;top:235.4px;width:8.350px;height:8px;background:#2c4fa8"></div>
<div class="t th" style="top:236.70000000000002px">Novel</div>
<div class="a" style="left:860.5px;top:250.03px;width:8.350px;height:8px;background:#ee3a3a"></div>
<div class="a" style="left:868.85px;top:250.03px;width:8.350px;height:8px;background:#3a8cee"></div>
<div class="a" style="left:877.2px;top:250.03px;width:8.350px;height:8px;background:#fbbc1e"></div>
<div class="a" style="left:885.55px;top:250.03px;width:8.350px;height:8px;background:#2c9a5a"></div>
<div class="a" style="left:893.9px;top:250.03px;width:8.350px;height:8px;background:#4a4ae0"></div>
<div class="a" style="left:902.25px;top:250.03px;width:8.350px;height:8px;background:#e81e1e"></div>
<div class="a" style="left:910.6px;top:250.03px;width:8.350px;height:8px;background:#7a4ae0"></div>
<div class="a" style="left:918.95px;top:250.03px;width:8.350px;height:8px;background:#d83aa8"></div>
<div class="a" style="left:927.3px;top:250.03px;width:8.350px;height:8px;background:#1ea8f0"></div>
<div class="a" style="left:935.65px;top:250.03px;width:8.350px;height:8px;background:#f57a1e"></div>
<div class="t th" style="top:251.33px">Charm</div>
<div class="a" style="left:860.5px;top:264.66px;width:8.350px;height:8px;background:#2c9a5a"></div>
<div class="a" style="left:868.85px;top:264.66px;width:8.350px;height:8px;background:#f5c84a"></div>
<div class="a" style="left:877.2px;top:264.66px;width:8.350px;height:8px;background:#f09a4a"></div>
<div class="a" style="left:885.55px;top:264.66px;width:8.350px;height:8px;background:#ee5060"></div>
<div class="a" style="left:893.9px;top:264.66px;width:8.350px;height:8px;background:#2c8ae0"></div>
<div class="a" style="left:902.25px;top:264.66px;width:8.350px;height:8px;background:#9a5ae0"></div>
<div class="a" style="left:910.6px;top:264.66px;width:8.350px;height:8px;background:#2c9a5a"></div>
<div class="a" style="left:918.95px;top:264.66px;width:8.350px;height:8px;background:#2c9ae0"></div>
<div class="a" style="left:927.3px;top:264.66px;width:8.350px;height:8px;background:#c06af0"></div>
<div class="a" style="left:935.65px;top:264.66px;width:8.350px;height:8px;background:#3ac8d8"></div>
<div class="t th" style="top:265.96000000000004px">Antique</div>
<div class="a" style="left:860.5px;top:279.29px;width:8.350px;height:8px;background:#fbbc1e"></div>
<div class="a" style="left:868.85px;top:279.29px;width:8.350px;height:8px;background:#7ab89a"></div>
<div class="a" style="left:877.2px;top:279.29px;width:8.350px;height:8px;background:#7a9af5"></div>
<div class="a" style="left:885.55px;top:279.29px;width:8.350px;height:8px;background:#c07af0"></div>
<div class="a" style="left:893.9px;top:279.29px;width:8.350px;height:8px;background:#8ac83a"></div>
<div class="a" style="left:902.25px;top:279.29px;width:8.350px;height:8px;background:#f59a8a"></div>
<div class="a" style="left:910.6px;top:279.29px;width:8.350px;height:8px;background:#f060a8"></div>
<div class="a" style="left:918.95px;top:279.29px;width:8.350px;height:8px;background:#f57a1e"></div>
<div class="a" style="left:927.3px;top:279.29px;width:8.350px;height:8px;background:#f58af5"></div>
<div class="a" style="left:935.65px;top:279.29px;width:8.350px;height:8px;background:#7ab89a"></div>
<div class="t th" style="top:280.59000000000003px">Fresh</div>
<div class="a" style="left:860.5px;top:293.92px;width:8.350px;height:8px;background:#d83aa8"></div>
<div class="a" style="left:868.85px;top:293.92px;width:8.350px;height:8px;background:#3ac8d8"></div>
<div class="a" style="left:877.2px;top:293.92px;width:8.350px;height:8px;background:#f06060"></div>
<div class="a" style="left:885.55px;top:293.92px;width:8.350px;height:8px;background:#4ab88a"></div>
<div class="a" style="left:893.9px;top:293.92px;width:8.350px;height:8px;background:#f5c84a"></div>
<div class="a" style="left:902.25px;top:293.92px;width:8.350px;height:8px;background:#ee5070"></div>
<div class="a" style="left:910.6px;top:293.92px;width:8.350px;height:8px;background:#2c4fa8"></div>
<div class="a" style="left:918.95px;top:293.92px;width:8.350px;height:8px;background:#f58a4a"></div>
<div class="a" style="left:927.3px;top:293.92px;width:8.350px;height:8px;background:#9a5ae0"></div>
<div class="a" style="left:935.65px;top:293.92px;width:8.350px;height:8px;background:#3aa89a"></div>
<div class="t th" style="top:295.22px">Live</div>
<div class="a" style="left:860.5px;top:308.55px;width:8.350px;height:8px;background:#1e2c6a"></div>
<div class="a" style="left:868.85px;top:308.55px;width:8.350px;height:8px;background:#4a7fe8"></div>
<div class="a" style="left:877.2px;top:308.55px;width:8.350px;height:8px;background:#3aa89a"></div>
<div class="a" style="left:885.55px;top:308.55px;width:8.350px;height:8px;background:#3ac8c8"></div>
<div class="a" style="left:893.9px;top:308.55px;width:8.350px;height:8px;background:#f56060"></div>
<div class="a" style="left:902.25px;top:308.55px;width:8.350px;height:8px;background:#f5c83a"></div>
<div class="a" style="left:910.6px;top:308.55px;width:8.350px;height:8px;background:#f58a4a"></div>
<div class="a" style="left:918.95px;top:308.55px;width:8.350px;height:8px;background:#4ab84a"></div>
<div class="a" style="left:927.3px;top:308.55px;width:8.350px;height:8px;background:#f060b8"></div>
<div class="a" style="left:935.65px;top:308.55px;width:8.350px;height:8px;background:#f58a4a"></div>
<div class="t th" style="top:309.85px">Crystal</div>
<div class="a" style="left:860.5px;top:323.18px;width:8.350px;height:8px;background:#2c6ac8"></div>
<div class="a" style="left:868.85px;top:323.18px;width:8.350px;height:8px;background:#f57a60"></div>
<div class="a" style="left:877.2px;top:323.18px;width:8.350px;height:8px;background:#3a8cee"></div>
<div class="a" style="left:885.55px;top:323.18px;width:8.350px;height:8px;background:#5ad8c8"></div>
<div class="a" style="left:893.9px;top:323.18px;width:8.350px;height:8px;background:#fbc84a"></div>
<div class="a" style="left:902.25px;top:323.18px;width:8.350px;height:8px;background:#ee4a4a"></div>
<div class="a" style="left:910.6px;top:323.18px;width:8.350px;height:8px;background:#8ab82c"></div>
<div class="a" style="left:918.95px;top:323.18px;width:8.350px;height:8px;background:#9a5ae0"></div>
<div class="a" style="left:927.3px;top:323.18px;width:8.350px;height:8px;background:#4ac8e8"></div>
<div class="a" style="left:935.65px;top:323.18px;width:8.350px;height:8px;background:#f050a8"></div>
<div class="t th" style="top:324.48px">Broad</div>
<div class="a" style="left:860.5px;top:337.81px;width:8.350px;height:8px;background:#f59a4a"></div>
<div class="a" style="left:868.85px;top:337.81px;width:8.350px;height:8px;background:#fbc83a"></div>
<div class="a" style="left:877.2px;top:337.81px;width:8.350px;height:8px;background:#3ac8e8"></div>
<div class="a" style="left:885.55px;top:337.81px;width:8.350px;height:8px;background:#f05a5a"></div>
<div class="a" style="left:893.9px;top:337.81px;width:8.350px;height:8px;background:#a8d84a"></div>
<div class="a" style="left:902.25px;top:337.81px;width:8.350px;height:8px;background:#9a5ae0"></div>
<div class="a" style="left:910.6px;top:337.81px;width:8.350px;height:8px;background:#4ad8e8"></div>
<div class="a" style="left:918.95px;top:337.81px;width:8.350px;height:8px;background:#f050a8"></div>
<div class="a" style="left:927.3px;top:337.81px;width:8.350px;height:8px;background:#3a5ae0"></div>
<div class="a" style="left:935.65px;top:337.81px;width:8.350px;height:8px;background:#4ab84a"></div>
<div class="t th" style="top:339.11px">Sprinkle</div>
<div class="a" style="left:860.5px;top:352.44px;width:8.350px;height:8px;background:#4a8cee"></div>
<div class="a" style="left:868.85px;top:352.44px;width:8.350px;height:8px;background:#9a5ae0"></div>
<div class="a" style="left:877.2px;top:352.44px;width:8.350px;height:8px;background:#a8d84a"></div>
<div class="a" style="left:885.55px;top:352.44px;width:8.350px;height:8px;background:#2c9a5a"></div>
<div class="a" style="left:893.9px;top:352.44px;width:8.350px;height:8px;background:#5ad8c8"></div>
<div class="a" style="left:902.25px;top:352.44px;width:8.350px;height:8px;background:#3a4ae0"></div>
<div class="a" style="left:910.6px;top:352.44px;width:8.350px;height:8px;background:#9a5ae0"></div>
<div class="a" style="left:918.95px;top:352.44px;width:8.350px;height:8px;background:#5ad8a8"></div>
<div class="a" style="left:927.3px;top:352.44px;width:8.350px;height:8px;background:#3aa88a"></div>
<div class="a" style="left:935.65px;top:352.44px;width:8.350px;height:8px;background:#5ab84a"></div>
<div class="t th" style="top:353.74px">Tranquil</div>
<div class="a" style="left:860.5px;top:367.07000000000005px;width:8.350px;height:8px;background:#f05a4a"></div>
<div class="a" style="left:868.85px;top:367.07000000000005px;width:8.350px;height:8px;background:#f09a4a"></div>
<div class="a" style="left:877.2px;top:367.07000000000005px;width:8.350px;height:8px;background:#fbc84a"></div>
<div class="a" style="left:885.55px;top:367.07000000000005px;width:8.350px;height:8px;background:#2c6a4a"></div>
<div class="a" style="left:893.9px;top:367.07000000000005px;width:8.350px;height:8px;background:#5ab84a"></div>
<div class="a" style="left:902.25px;top:367.07000000000005px;width:8.350px;height:8px;background:#8ac84a"></div>
<div class="a" style="left:910.6px;top:367.07000000000005px;width:8.350px;height:8px;background:#d8e84a"></div>
<div class="a" style="left:918.95px;top:367.07000000000005px;width:8.350px;height:8px;background:#2c9aa8"></div>
<div class="a" style="left:927.3px;top:367.07000000000005px;width:8.350px;height:8px;background:#5ab8a8"></div>
<div class="a" style="left:935.65px;top:367.07000000000005px;width:8.350px;height:8px;background:#5ad8c8"></div>
<div class="t th" style="top:368.37000000000006px">Opulent</div>
<div class="a" style="left:860.5px;top:381.70000000000005px;width:8.350px;height:8px;background:#7a3ae8"></div>
<div class="a" style="left:868.85px;top:381.70000000000005px;width:8.350px;height:8px;background:#a8d83a"></div>
<div class="a" style="left:877.2px;top:381.70000000000005px;width:8.350px;height:8px;background:#3aa88a"></div>
<div class="a" style="left:885.55px;top:381.70000000000005px;width:8.350px;height:8px;background:#f5c83a"></div>
<div class="a" style="left:893.9px;top:381.70000000000005px;width:8.350px;height:8px;background:#f050a8"></div>
<div class="a" style="left:902.25px;top:381.70000000000005px;width:8.350px;height:8px;background:#5aa8f0"></div>
<div class="a" style="left:910.6px;top:381.70000000000005px;width:8.350px;height:8px;background:#f06a5a"></div>
<div class="a" style="left:918.95px;top:381.70000000000005px;width:8.350px;height:8px;background:#4ad8c8"></div>
<div class="a" style="left:927.3px;top:381.70000000000005px;width:8.350px;height:8px;background:#9a5ae8"></div>
<div class="a" style="left:935.65px;top:381.70000000000005px;width:8.350px;height:8px;background:#4ad8f0"></div>
<div class="t th" style="top:383.00000000000006px">Placid</div>
<div class="a" style="left:860.5px;top:396.33000000000004px;width:8.350px;height:8px;background:#5aa8f0"></div>
<div class="a" style="left:868.85px;top:396.33000000000004px;width:8.350px;height:8px;background:#f57a7a"></div>
<div class="a" style="left:877.2px;top:396.33000000000004px;width:8.350px;height:8px;background:#9a9a9a"></div>
<div class="a" style="left:885.55px;top:396.33000000000004px;width:8.350px;height:8px;background:#9ab82c"></div>
<div class="a" style="left:893.9px;top:396.33000000000004px;width:8.350px;height:8px;background:#e0a8d8"></div>
<div class="a" style="left:902.25px;top:396.33000000000004px;width:8.350px;height:8px;background:#a87ae0"></div>
<div class="a" style="left:910.6px;top:396.33000000000004px;width:8.350px;height:8px;background:#fbc84a"></div>
<div class="a" style="left:918.95px;top:396.33000000000004px;width:8.350px;height:8px;background:#a8b8c8"></div>
<div class="a" style="left:927.3px;top:396.33000000000004px;width:8.350px;height:8px;background:#3ab8c8"></div>
<div class="a" style="left:935.65px;top:396.33000000000004px;width:8.350px;height:8px;background:#e07a4a"></div>
<div class="t th" style="top:397.63000000000005px">Natural</div>
<div class="a" style="left:860.5px;top:410.96000000000004px;width:8.350px;height:8px;background:#a88ad8"></div>
<div class="a" style="left:868.85px;top:410.96000000000004px;width:8.350px;height:8px;background:#e05a9a"></div>
<div class="a" style="left:877.2px;top:410.96000000000004px;width:8.350px;height:8px;background:#5a9ae0"></div>
<div class="a" style="left:885.55px;top:410.96000000000004px;width:8.350px;height:8px;background:#a87a7a"></div>
<div class="a" style="left:893.9px;top:410.96000000000004px;width:8.350px;height:8px;background:#4ab88a"></div>
<div class="a" style="left:902.25px;top:410.96000000000004px;width:8.350px;height:8px;background:#3ab8c8"></div>
<div class="a" style="left:910.6px;top:410.96000000000004px;width:8.350px;height:8px;background:#2c3aa8"></div>
<div class="a" style="left:918.95px;top:410.96000000000004px;width:8.350px;height:8px;background:#8a7a7a"></div>
<div class="a" style="left:927.3px;top:410.96000000000004px;width:8.350px;height:8px;background:#a8b8c8"></div>
<div class="a" style="left:935.65px;top:410.96000000000004px;width:8.350px;height:8px;background:#4a6a9a"></div>
<div class="t th" style="top:412.26000000000005px">Dream</div>
<div class="a" style="left:860.5px;top:425.59000000000003px;width:8.350px;height:8px;background:#2c8a4a"></div>
<div class="a" style="left:868.85px;top:425.59000000000003px;width:8.350px;height:8px;background:#fbbc1e"></div>
<div class="a" style="left:877.2px;top:425.59000000000003px;width:8.350px;height:8px;background:#1e2c3a"></div>
<div class="a" style="left:885.55px;top:425.59000000000003px;width:8.350px;height:8px;background:#e03a3a"></div>
<div class="a" style="left:893.9px;top:425.59000000000003px;width:8.350px;height:8px;background:#3ab89a"></div>
<div class="a" style="left:902.25px;top:425.59000000000003px;width:8.350px;height:8px;background:#2c8a8a"></div>
<div class="a" style="left:910.6px;top:425.59000000000003px;width:8.350px;height:8px;background:#f57a7a"></div>
<div class="a" style="left:918.95px;top:425.59000000000003px;width:8.350px;height:8px;background:#a8c8b8"></div>
<div class="a" style="left:927.3px;top:425.59000000000003px;width:8.350px;height:8px;background:#2c6a3a"></div>
<div class="a" style="left:935.65px;top:425.59000000000003px;width:8.350px;height:8px;background:#8a3a6a"></div>
<div class="t th" style="top:426.89000000000004px">Garden</div>
<div class="a" style="left:860.5px;top:440.22px;width:8.350px;height:8px;background:#3ab8c8"></div>
<div class="a" style="left:868.85px;top:440.22px;width:8.350px;height:8px;background:#e8a8d8"></div>
<div class="a" style="left:877.2px;top:440.22px;width:8.350px;height:8px;background:#5aa8f0"></div>
<div class="a" style="left:885.55px;top:440.22px;width:8.350px;height:8px;background:#e07a6a"></div>
<div class="a" style="left:893.9px;top:440.22px;width:8.350px;height:8px;background:#7ab88a"></div>
<div class="a" style="left:902.25px;top:440.22px;width:8.350px;height:8px;background:#fbc84a"></div>
<div class="a" style="left:910.6px;top:440.22px;width:8.350px;height:8px;background:#3ab8c8"></div>
<div class="a" style="left:918.95px;top:440.22px;width:8.350px;height:8px;background:#f07ab8"></div>
<div class="a" style="left:927.3px;top:440.22px;width:8.350px;height:8px;background:#a8c84a"></div>
<div class="a" style="left:935.65px;top:440.22px;width:8.350px;height:8px;background:#d8c8a8"></div>
<div class="t th" style="top:441.52000000000004px">Candy</div>
<div class="a" style="left:860.5px;top:454.85px;width:8.350px;height:8px;background:#3ab87a"></div>
<div class="a" style="left:868.85px;top:454.85px;width:8.350px;height:8px;background:#4a7ad8"></div>
<div class="a" style="left:877.2px;top:454.85px;width:8.350px;height:8px;background:#9a9a9a"></div>
<div class="a" style="left:885.55px;top:454.85px;width:8.350px;height:8px;background:#1ea8f0"></div>
<div class="a" style="left:893.9px;top:454.85px;width:8.350px;height:8px;background:#fbbc1e"></div>
<div class="a" style="left:902.25px;top:454.85px;width:8.350px;height:8px;background:#6ac84a"></div>
<div class="a" style="left:910.6px;top:454.85px;width:8.350px;height:8px;background:#f58a4a"></div>
<div class="a" style="left:918.95px;top:454.85px;width:8.350px;height:8px;background:#e83a3a"></div>
<div class="a" style="left:927.3px;top:454.85px;width:8.350px;height:8px;background:#3a4ae0"></div>
<div class="a" style="left:935.65px;top:454.85px;width:8.350px;height:8px;background:#9a4ae0"></div>
<div class="t th" style="top:456.15000000000003px">Bloss...</div>
<div class="a" style="left:860.5px;top:469.48px;width:8.350px;height:8px;background:#fbc84a"></div>
<div class="a" style="left:868.85px;top:469.48px;width:8.350px;height:8px;background:#8ab82c"></div>
<div class="a" style="left:877.2px;top:469.48px;width:8.350px;height:8px;background:#2c4aa8"></div>
<div class="a" style="left:885.55px;top:469.48px;width:8.350px;height:8px;background:#f07a1e"></div>
<div class="a" style="left:893.9px;top:469.48px;width:8.350px;height:8px;background:#4a7af0"></div>
<div class="a" style="left:902.25px;top:469.48px;width:8.350px;height:8px;background:#2cb84a"></div>
<div class="a" style="left:910.6px;top:469.48px;width:8.350px;height:8px;background:#7a9ae0"></div>
<div class="a" style="left:918.95px;top:469.48px;width:8.350px;height:8px;background:#a8d82c"></div>
<div class="a" style="left:927.3px;top:469.48px;width:8.350px;height:8px;background:#f57a5a"></div>
<div class="a" style="left:935.65px;top:469.48px;width:8.350px;height:8px;background:#3ab8c8"></div>
<div class="t th" style="top:470.78000000000003px">Elegant</div>
<div class="a" style="left:860.5px;top:484.11px;width:8.350px;height:8px;background:#a89a8a"></div>
<div class="a" style="left:868.85px;top:484.11px;width:8.350px;height:8px;background:#7ab88a"></div>
<div class="a" style="left:877.2px;top:484.11px;width:8.350px;height:8px;background:#5a9aa8"></div>
<div class="a" style="left:885.55px;top:484.11px;width:8.350px;height:8px;background:#4a8ad8"></div>
<div class="a" style="left:893.9px;top:484.11px;width:8.350px;height:8px;background:#f08a9a"></div>
<div class="a" style="left:902.25px;top:484.11px;width:8.350px;height:8px;background:#f5a84a"></div>
<div class="a" style="left:910.6px;top:484.11px;width:8.350px;height:8px;background:#4a5a7a"></div>
<div class="a" style="left:918.95px;top:484.11px;width:8.350px;height:8px;background:#a8b84a"></div>
<div class="a" style="left:927.3px;top:484.11px;width:8.350px;height:8px;background:#7a4a3a"></div>
<div class="a" style="left:935.65px;top:484.11px;width:8.350px;height:8px;background:#d0d0d0"></div>
<div class="t th" style="top:485.41px">BPMN</div>
<div class="a" style="left:860.5px;top:498.74px;width:8.350px;height:8px;background:#4a9af0"></div>
<div class="a" style="left:868.85px;top:498.74px;width:8.350px;height:8px;background:#1e2c7a"></div>
<div class="a" style="left:877.2px;top:498.74px;width:8.350px;height:8px;background:#3ab8c8"></div>
<div class="a" style="left:885.55px;top:498.74px;width:8.350px;height:8px;background:#f08a9a"></div>
<div class="a" style="left:893.9px;top:498.74px;width:8.350px;height:8px;background:#3ac8c8"></div>
<div class="a" style="left:902.25px;top:498.74px;width:8.350px;height:8px;background:#e05a9a"></div>
<div class="a" style="left:910.6px;top:498.74px;width:8.350px;height:8px;background:#2c6ac8"></div>
<div class="a" style="left:918.95px;top:498.74px;width:8.350px;height:8px;background:#fbbc1e"></div>
<div class="a" style="left:927.3px;top:498.74px;width:8.350px;height:8px;background:#4a7ad8"></div>
<div class="a" style="left:935.65px;top:498.74px;width:8.350px;height:8px;background:#1e9ae8"></div>
<div class="t th" style="top:500.04px">Jolly</div>
<div class="a" style="left:860.5px;top:513.37px;width:8.350px;height:8px;background:#7a5a4a"></div>
<div class="a" style="left:868.85px;top:513.37px;width:8.350px;height:8px;background:#e07a4a"></div>
<div class="a" style="left:877.2px;top:513.37px;width:8.350px;height:8px;background:#8aa8c8"></div>
<div class="a" style="left:885.55px;top:513.37px;width:8.350px;height:8px;background:#5a8ad8"></div>
<div class="a" style="left:893.9px;top:513.37px;width:8.350px;height:8px;background:#e09a9a"></div>
<div class="a" style="left:902.25px;top:513.37px;width:8.350px;height:8px;background:#6ab89a"></div>
<div class="a" style="left:910.6px;top:513.37px;width:8.350px;height:8px;background:#8a9a5a"></div>
<div class="a" style="left:918.95px;top:513.37px;width:8.350px;height:8px;background:#9a9a9a"></div>
<div class="a" style="left:927.3px;top:513.37px;width:8.350px;height:8px;background:#e8d82c"></div>
<div class="a" style="left:935.65px;top:513.37px;width:8.350px;height:8px;background:#7a8ab8"></div>
<div class="t th" style="top:514.67px">Town</div>
<div class="a" style="left:298px;top:507.500px;width:530px;height:6px;background:#f0f0f0"></div>
<div class="a" style="left:421.500px;top:508.300px;width:277.500px;height:4px;background:#c4c4c4;border-radius:2px"></div>
<div class="a" style="left:298px;top:513.500px;width:536px;height:9.500px;background:#fafafa"></div>
<svg style="left:304px;top:514.500px" width="8" height="8" viewBox="0 0 8 8"><path d="M3.500 1L1 3.500 3.500 6 6 3.500zM1 3.500h5" stroke="#222" stroke-width=".8" fill="none"/><path d="M.5 7h5" stroke="#222" stroke-width="1"/></svg>
<div class="t" style="left:311px;top:517px;font-size:3.500px;color:#333">&#9662;</div>
<div class="a" style="left:315.40px;top:514.800px;width:5.800px;height:7.700px;background:#c0182c"></div>
<div class="a" style="left:321.15px;top:514.800px;width:5.800px;height:7.700px;background:#d82c3a"></div>
<div class="a" style="left:326.90px;top:514.800px;width:5.800px;height:7.700px;background:#e84a5a"></div>
<div class="a" style="left:332.65px;top:514.800px;width:5.800px;height:7.700px;background:#f06a7a"></div>
<div class="a" style="left:338.40px;top:514.800px;width:5.800px;height:7.700px;background:#f5a8b8"></div>
<div class="a" style="left:344.15px;top:514.800px;width:5.800px;height:7.700px;background:#1e8a8a"></div>
<div class="a" style="left:349.90px;top:514.800px;width:5.800px;height:7.700px;background:#2c9aa8"></div>
<div class="a" style="left:355.65px;top:514.800px;width:5.800px;height:7.700px;background:#3ab8c8"></div>
<div class="a" style="left:361.40px;top:514.800px;width:5.800px;height:7.700px;background:#4ac8e8"></div>
<div class="a" style="left:367.15px;top:514.800px;width:5.800px;height:7.700px;background:#a8e0f5"></div>
<div class="a" style="left:372.90px;top:514.800px;width:5.800px;height:7.700px;background:#f03a2c"></div>
<div class="a" style="left:378.65px;top:514.800px;width:5.800px;height:7.700px;background:#f5702c"></div>
<div class="a" style="left:384.40px;top:514.800px;width:5.800px;height:7.700px;background:#fb9a1e"></div>
<div class="a" style="left:390.15px;top:514.800px;width:5.800px;height:7.700px;background:#fbbc3a"></div>
<div class="a" style="left:395.90px;top:514.800px;width:5.800px;height:7.700px;background:#fbd86a"></div>
<div class="a" style="left:401.65px;top:514.800px;width:5.800px;height:7.700px;background:#1e8a7a"></div>
<div class="a" style="left:407.40px;top:514.800px;width:5.800px;height:7.700px;background:#2ca88a"></div>
<div class="a" style="left:413.15px;top:514.800px;width:5.800px;height:7.700px;background:#3ab8a8"></div>
<div class="a" style="left:418.90px;top:514.800px;width:5.800px;height:7.700px;background:#5ad8c8"></div>
<div class="a" style="left:424.65px;top:514.800px;width:5.800px;height:7.700px;background:#8ae0d8"></div>
<div class="a" style="left:430.40px;top:514.800px;width:5.800px;height:7.700px;background:#8a3a6a"></div>
<div class="a" style="left:436.15px;top:514.800px;width:5.800px;height:7.700px;background:#c04a8a"></div>
<div class="a" style="left:441.90px;top:514.800px;width:5.800px;height:7.700px;background:#e06aa8"></div>
<div class="a" style="left:447.65px;top:514.800px;width:5.800px;height:7.700px;background:#f08ab8"></div>
<div class="a" style="left:453.40px;top:514.800px;width:5.800px;height:7.700px;background:#f5c8d8"></div>
<div class="a" style="left:459.15px;top:514.800px;width:5.800px;height:7.700px;background:#6a9a1e"></div>
<div class="a" style="left:464.90px;top:514.800px;width:5.800px;height:7.700px;background:#7aa82c"></div>
<div class="a" style="left:470.65px;top:514.800px;width:5.800px;height:7.700px;background:#9ac83a"></div>
<div class="a" style="left:476.40px;top:514.800px;width:5.800px;height:7.700px;background:#b8d86a"></div>
<div class="a" style="left:482.15px;top:514.800px;width:5.800px;height:7.700px;background:#d8e8a8"></div>
<div class="a" style="left:487.90px;top:514.800px;width:5.800px;height:7.700px;background:#2c4aa8"></div>
<div class="a" style="left:493.65px;top:514.800px;width:5.800px;height:7.700px;background:#3a4ac8"></div>
<div class="a" style="left:499.40px;top:514.800px;width:5.800px;height:7.700px;background:#5a5ae0"></div>
<div class="a" style="left:505.15px;top:514.800px;width:5.800px;height:7.700px;background:#8a7af0"></div>
<div class="a" style="left:510.90px;top:514.800px;width:5.800px;height:7.700px;background:#a89af5"></div>
<div class="a" style="left:516.65px;top:514.800px;width:5.800px;height:7.700px;background:#fbac1e"></div>
<div class="a" style="left:522.40px;top:514.800px;width:5.800px;height:7.700px;background:#fbbc3a"></div>
<div class="a" style="left:528.15px;top:514.800px;width:5.800px;height:7.700px;background:#f5d84a"></div>
<div class="a" style="left:533.90px;top:514.800px;width:5.800px;height:7.700px;background:#f5e86a"></div>
<div class="a" style="left:539.65px;top:514.800px;width:5.800px;height:7.700px;background:#f5f58a"></div>
<div class="a" style="left:545.40px;top:514.800px;width:5.800px;height:7.700px;background:#8a4ad8"></div>
<div class="a" style="left:551.15px;top:514.800px;width:5.800px;height:7.700px;background:#a85ae0"></div>
<div class="a" style="left:556.90px;top:514.800px;width:5.800px;height:7.700px;background:#c07af0"></div>
<div class="a" style="left:562.65px;top:514.800px;width:5.800px;height:7.700px;background:#d89af5"></div>
<div class="a" style="left:568.40px;top:514.800px;width:5.800px;height:7.700px;background:#e8c8f8"></div>
<div class="a" style="left:574.15px;top:514.800px;width:5.800px;height:7.700px;background:#2c7a4a"></div>
<div class="a" style="left:579.90px;top:514.800px;width:5.800px;height:7.700px;background:#3a9a5a"></div>
<div class="a" style="left:585.65px;top:514.800px;width:5.800px;height:7.700px;background:#5aa86a"></div>
<div class="a" style="left:591.40px;top:514.800px;width:5.800px;height:7.700px;background:#5ab87a"></div>
<div class="a" style="left:597.15px;top:514.800px;width:5.800px;height:7.700px;background:#a8d8b8"></div>
<div class="a" style="left:602.90px;top:514.800px;width:5.800px;height:7.700px;background:#e82c2c"></div>
<div class="a" style="left:608.65px;top:514.800px;width:5.800px;height:7.700px;background:#f04a4a"></div>
<div class="a" style="left:614.40px;top:514.800px;width:5.800px;height:7.700px;background:#f56a6a"></div>
<div class="a" style="left:620.15px;top:514.800px;width:5.800px;height:7.700px;background:#f5807a"></div>
<div class="a" style="left:625.90px;top:514.800px;width:5.800px;height:7.700px;background:#f5a08a"></div>
<div class="a" style="left:631.65px;top:514.800px;width:5.800px;height:7.700px;background:#2c4aa8"></div>
<div class="a" style="left:637.40px;top:514.800px;width:5.800px;height:7.700px;background:#3a5ad8"></div>
<div class="a" style="left:643.15px;top:514.800px;width:5.800px;height:7.700px;background:#4a6af0"></div>
<div class="a" style="left:648.90px;top:514.800px;width:5.800px;height:7.700px;background:#6a8af5"></div>
<div class="a" style="left:654.65px;top:514.800px;width:5.800px;height:7.700px;background:#8ab8f5"></div>
<div class="a" style="left:660.40px;top:514.800px;width:5.800px;height:7.700px;background:#7a3a0e"></div>
<div class="a" style="left:666.15px;top:514.800px;width:5.800px;height:7.700px;background:#9a4a1e"></div>
<div class="a" style="left:671.90px;top:514.800px;width:5.800px;height:7.700px;background:#b85a2c"></div>
<div class="a" style="left:677.65px;top:514.800px;width:5.800px;height:7.700px;background:#d8703a"></div>
<div class="a" style="left:683.40px;top:514.800px;width:5.800px;height:7.700px;background:#e88a5a"></div>
<div class="a" style="left:689.15px;top:514.800px;width:5.800px;height:7.700px;background:#1e8ae8"></div>
<div class="a" style="left:694.90px;top:514.800px;width:5.800px;height:7.700px;background:#3a9af0"></div>
<div class="a" style="left:700.65px;top:514.800px;width:5.800px;height:7.700px;background:#4aa8f5"></div>
<div class="a" style="left:706.40px;top:514.800px;width:5.800px;height:7.700px;background:#3ab8f0"></div>
<div class="a" style="left:712.15px;top:514.800px;width:5.800px;height:7.700px;background:#5ad0f0"></div>
<div class="a" style="left:717.90px;top:514.800px;width:5.800px;height:7.700px;background:#8a5a3a"></div>
<div class="a" style="left:723.65px;top:514.800px;width:5.800px;height:7.700px;background:#a86a4a"></div>
<div class="a" style="left:729.40px;top:514.800px;width:5.800px;height:7.700px;background:#b87a5a"></div>
<div class="a" style="left:735.15px;top:514.800px;width:5.800px;height:7.700px;background:#d88a5a"></div>
<div class="a" style="left:740.90px;top:514.800px;width:5.800px;height:7.700px;background:#f0a06a"></div>
<div class="a" style="left:746.65px;top:514.800px;width:5.800px;height:7.700px;background:#8a8a8a"></div>
<div class="a" style="left:752.40px;top:514.800px;width:5.800px;height:7.700px;background:#b8a898"></div>
<div class="a" style="left:758.15px;top:514.800px;width:5.800px;height:7.700px;background:#d0c8b8"></div>
<div class="a" style="left:763.90px;top:514.800px;width:5.800px;height:7.700px;background:#e8e0d0"></div>
<div class="a" style="left:769.65px;top:514.800px;width:5.800px;height:7.700px;background:#f0ece0"></div>
<div class="a" style="left:775.40px;top:514.800px;width:5.800px;height:7.700px;background:#1e2838"></div>
<div class="a" style="left:781.15px;top:514.800px;width:5.800px;height:7.700px;background:#3a3a3a"></div>
<div class="a" style="left:786.90px;top:514.800px;width:5.800px;height:7.700px;background:#5a5a5a"></div>
<div class="a" style="left:792.65px;top:514.800px;width:5.800px;height:7.700px;background:#6a6a6a"></div>
<div class="a" style="left:798.40px;top:514.800px;width:5.800px;height:7.700px;background:#8a8a8a"></div>
<div class="a" style="left:804.15px;top:514.800px;width:5.800px;height:7.700px;background:#b0b0b0"></div>
<div class="a" style="left:809.90px;top:514.800px;width:5.800px;height:7.700px;background:#c8c8c8"></div>
<div class="a" style="left:815.65px;top:514.800px;width:5.800px;height:7.700px;background:#d8d8d8"></div>
<div class="a" style="left:821.40px;top:514.800px;width:5.800px;height:7.700px;background:#e8e8e8"></div>
<div class="a" style="left:827.15px;top:514.800px;width:5.800px;height:7.700px;background:#f8f8f8"></div>
<div class="a" style="left:0;top:522.500px;width:1000px;height:19.500px;background:#f5f5f5;border-top:1px solid #e2e2e2"></div>
<svg style="left:5.500px;top:528px" width="11" height="7" viewBox="0 0 11 7"><rect x="2.500" y=".7" width="6" height="5.600" stroke="#222" stroke-width=".9" fill="none"/><path d="M.6 .5v6M10.400 .5v6" stroke="#222" stroke-width=".9" fill="none"/></svg>
<div class="a" style="left:22.500px;top:526px;width:1px;height:13px;background:#ddd"></div>
<div class="t" style="left:28.500px;top:528.500px;font-size:6.500px;color:#222">Page-1</div>
<div class="t" style="left:78.500px;top:529.500px;font-size:4.200px;color:#444">&#9662;</div>
<div class="a" style="left:85px;top:526px;width:1px;height:13px;background:#ddd"></div>
<svg style="left:815.500px;top:528px" width="8" height="8" viewBox="0 0 8 8"><path d="M.5 2.200V.5h1.700M5.800 .5h1.700v1.700M.5 5.800v1.700h1.700M7.500 5.800v1.700H5.800" stroke="#222" stroke-width=".9" fill="none"/><rect x="2.700" y="2.500" width="2.600" height="3" fill="#222"/></svg>
<div class="t" style="left:828.500px;top:528.500px;font-size:6.500px;color:#222">Focus</div>
<svg style="left:852.500px;top:527.500px" width="9" height="9" viewBox="0 0 9 9"><circle cx="4.500" cy="4.500" r="3.800" stroke="#222" stroke-width=".9" fill="none"/><path d="M3.500 2.800v3.400l2.800-1.700z" fill="#222"/></svg>
<div class="a" style="left:867.500px;top:531.700px;width:4.500px;height:1px;background:#222"></div>
<div class="a" style="left:876px;top:531.700px;width:42px;height:1px;background:#bbb"></div>
<div class="a" style="left:876px;top:531.400px;width:11px;height:1.500px;background:#888"></div>
<div class="a" style="left:884.500px;top:529.200px;width:6px;height:6px;border-radius:3px;background:#fff;border:1px solid #888"></div>
<svg style="left:922px;top:529.500px" width="5" height="5" viewBox="0 0 5 5"><path d="M2.500 0v5M0 2.500h5" stroke="#222" stroke-width=".9"/></svg>
<div class="t" style="left:935px;top:528.800px;font-size:6.200px;color:#222">100%</div>
<div class="t" style="left:952px;top:530px;font-size:4px;color:#444">&#9662;</div>
<svg style="left:964px;top:528px" width="8" height="8" viewBox="0 0 8 8"><path d="M.5 2.500V.5h2M5.500 .5h2v2M.5 5.500v2h2M7.500 5.500v2h-2" stroke="#222" stroke-width="1.100" fill="none"/></svg>
<svg style="left:976.500px;top:528px" width="9" height="8" viewBox="0 0 9 8"><rect x=".6" y=".6" width="7.800" height="6.800" stroke="#222" stroke-width=".9" fill="none"/><path d="M2.300 4h4.400M3.300 3l-1 1 1 1M5.700 3l1 1-1 1" stroke="#222" stroke-width=".9" fill="none"/></svg>
<div class="a" style="left:7.200px;top:69.800px;width:83.200px;height:293.500px;background:#fff;box-shadow:0 1px 4px rgba(0,0,0,.35)"></div>
<div class="t mi" style="top:76.89999999999999px">My Library</div>
<svg style="left:82.700px;top:77.7px" width="3" height="4" viewBox="0 0 3 4"><path d="M.2 .2l2.500 1.800L.2 3.800z" fill="#444"/></svg>
<div class="t mi" style="top:89.39999999999999px">General</div>
<svg style="left:82.700px;top:90.2px" width="3" height="4" viewBox="0 0 3 4"><path d="M.2 .2l2.500 1.800L.2 3.800z" fill="#444"/></svg>
<div class="t mi" style="top:101.89999999999999px">Smart Shapes</div>
<svg style="left:82.700px;top:102.7px" width="3" height="4" viewBox="0 0 3 4"><path d="M.2 .2l2.500 1.800L.2 3.800z" fill="#444"/></svg>
<div class="t mi" style="top:114.39999999999999px">Flowchart</div>
<svg style="left:82.700px;top:115.2px" width="3" height="4" viewBox="0 0 3 4"><path d="M.2 .2l2.500 1.800L.2 3.800z" fill="#444"/></svg>
<div class="t mi" style="top:126.9px">Mind Map</div>
<svg style="left:82.700px;top:127.70000000000002px" width="3" height="4" viewBox="0 0 3 4"><path d="M.2 .2l2.500 1.800L.2 3.800z" fill="#444"/></svg>
<div class="t mi" style="top:139.4px">Organizational Chart</div>
<svg style="left:82.700px;top:140.20000000000002px" width="3" height="4" viewBox="0 0 3 4"><path d="M.2 .2l2.500 1.800L.2 3.800z" fill="#444"/></svg>
<div class="t mi" style="top:151.9px">Family Tree</div>
<svg style="left:82.700px;top:152.70000000000002px" width="3" height="4" viewBox="0 0 3 4"><path d="M.2 .2l2.500 1.800L.2 3.800z" fill="#444"/></svg>
<div class="t mi" style="top:164.4px">Graphs and Charts</div>
<svg style="left:82.700px;top:165.20000000000002px" width="3" height="4" viewBox="0 0 3 4"><path d="M.2 .2l2.500 1.800L.2 3.800z" fill="#444"/></svg>
<div class="t mi" style="top:176.9px">Business Diagram</div>
<svg style="left:82.700px;top:177.70000000000002px" width="3" height="4" viewBox="0 0 3 4"><path d="M.2 .2l2.500 1.800L.2 3.800z" fill="#444"/></svg>
<div class="t mi" style="top:189.4px">Project Management</div>
<svg style="left:82.700px;top:190.20000000000002px" width="3" height="4" viewBox="0 0 3 4"><path d="M.2 .2l2.500 1.800L.2 3.800z" fill="#444"/></svg>
<div class="t mi" style="top:201.9px">Roadmap</div>
<svg style="left:82.700px;top:202.70000000000002px" width="3" height="4" viewBox="0 0 3 4"><path d="M.2 .2l2.500 1.800L.2 3.800z" fill="#444"/></svg>
<div class="t mi" style="top:214.4px">Software Engineering</div>
<svg style="left:82.700px;top:215.20000000000002px" width="3" height="4" viewBox="0 0 3 4"><path d="M.2 .2l2.500 1.800L.2 3.800z" fill="#444"/></svg>
<div class="t mi" style="top:226.9px">Database Modeling</div>
<svg style="left:82.700px;top:227.70000000000002px" width="3" height="4" viewBox="0 0 3 4"><path d="M.2 .2l2.500 1.800L.2 3.800z" fill="#444"/></svg>
<div class="t mi" style="top:239.4px">Network Diagram</div>
<svg style="left:82.700px;top:240.20000000000002px" width="3" height="4" viewBox="0 0 3 4"><path d="M.2 .2l2.500 1.800L.2 3.800z" fill="#444"/></svg>
<div class="t mi" style="top:251.9px">Cisco Network</div>
<svg style="left:82.700px;top:252.70000000000002px" width="3" height="4" viewBox="0 0 3 4"><path d="M.2 .2l2.500 1.800L.2 3.800z" fill="#444"/></svg>
<div class="t mi" style="top:264.40000000000003px">Cloud Service</div>
<svg style="left:82.700px;top:265.2px" width="3" height="4" viewBox="0 0 3 4"><path d="M.2 .2l2.500 1.800L.2 3.800z" fill="#444"/></svg>
<div class="a" style="left:9px;top:273.0px;width:79px;height:12.500px;background:#e4e4e4"></div>
<div class="t mi" style="top:276.90000000000003px">Floor Plan</div>
<svg style="left:82.700px;top:277.7px" width="3" height="4" viewBox="0 0 3 4"><path d="M.2 .2l2.500 1.800L.2 3.800z" fill="#444"/></svg>
<div class="t mi" style="top:289.40000000000003px">Electrical</div>
<svg style="left:82.700px;top:290.2px" width="3" height="4" viewBox="0 0 3 4"><path d="M.2 .2l2.500 1.800L.2 3.800z" fill="#444"/></svg>
<div class="t mi" style="top:301.90000000000003px">Industrial Automation</div>
<svg style="left:82.700px;top:302.7px" width="3" height="4" viewBox="0 0 3 4"><path d="M.2 .2l2.500 1.800L.2 3.800z" fill="#444"/></svg>
<div class="t mi" style="top:314.40000000000003px">PID</div>
<svg style="left:82.700px;top:315.2px" width="3" height="4" viewBox="0 0 3 4"><path d="M.2 .2l2.500 1.800L.2 3.800z" fill="#444"/></svg>
<div class="t mi" style="top:326.90000000000003px">Maps</div>
<svg style="left:82.700px;top:327.7px" width="3" height="4" viewBox="0 0 3 4"><path d="M.2 .2l2.500 1.800L.2 3.800z" fill="#444"/></svg>
<div class="t mi" style="top:339.40000000000003px">Wireframe</div>
<svg style="left:82.700px;top:340.2px" width="3" height="4" viewBox="0 0 3 4"><path d="M.2 .2l2.500 1.800L.2 3.800z" fill="#444"/></svg>
<div class="t mi" style="top:351.90000000000003px">Science</div>
<svg style="left:82.700px;top:352.7px" width="3" height="4" viewBox="0 0 3 4"><path d="M.2 .2l2.500 1.800L.2 3.800z" fill="#444"/></svg>
<div class="a" style="left:93px;top:172px;width:101px;height:370px;background:#fff;box-shadow:0 1px 4px rgba(0,0,0,.35)"></div>
<div class="t si" style="top:177.5px">Wall Shell and Structure</div>
<svg style="left:96px;top:176.8px" width="6" height="6" viewBox="0 0 6 6"><path d="M.5 2.800l1.600 2L5.200 .3" stroke="#222" stroke-width="1" fill="none"/></svg>
<div class="t si" style="top:190.0px">Doors and Windows</div>
<svg style="left:96px;top:189.3px" width="6" height="6" viewBox="0 0 6 6"><path d="M.5 2.800l1.600 2L5.200 .3" stroke="#222" stroke-width="1" fill="none"/></svg>
<div class="t si" style="top:202.5px">Alarm and Access Control</div>
<div class="t si" style="top:215.0px">Appliances</div>
<div class="t si" style="top:227.5px">Athletic Ground</div>
<div class="t si" style="top:240.0px">Bathroom</div>
<svg style="left:96px;top:239.3px" width="6" height="6" viewBox="0 0 6 6"><path d="M.5 2.800l1.600 2L5.200 .3" stroke="#222" stroke-width="1" fill="none"/></svg>
<div class="t si" style="top:252.5px">Bedroom</div>
<svg style="left:96px;top:251.8px" width="6" height="6" viewBox="0 0 6 6"><path d="M.5 2.800l1.600 2L5.200 .3" stroke="#222" stroke-width="1" fill="none"/></svg>
<div class="t si" style="top:265.0px">Building Core</div>
<div class="t si" style="top:277.5px">Cabinets and Bookcases</div>
<div class="t si" style="top:290.0px">Carpet</div>
<div class="t si" style="top:302.5px">Dimensioning</div>
<svg style="left:96px;top:301.8px" width="6" height="6" viewBox="0 0 6 6"><path d="M.5 2.800l1.600 2L5.200 .3" stroke="#222" stroke-width="1" fill="none"/></svg>
<div class="t si" style="top:315.0px">Electrical and Telecom</div>
<svg style="left:96px;top:314.3px" width="6" height="6" viewBox="0 0 6 6"><path d="M.5 2.800l1.600 2L5.200 .3" stroke="#222" stroke-width="1" fill="none"/></svg>
<div class="t si" style="top:327.5px">Fire and Emergency</div>
<svg style="left:96px;top:326.8px" width="6" height="6" viewBox="0 0 6 6"><path d="M.5 2.800l1.600 2L5.200 .3" stroke="#222" stroke-width="1" fill="none"/></svg>
<div class="t si" style="top:340.0px">Garden</div>
<div class="t si" style="top:352.5px">HVAC Controls</div>
<div class="t si" style="top:365.0px">HVAC Controls Equipment</div>
<svg style="left:96px;top:364.3px" width="6" height="6" viewBox="0 0 6 6"><path d="M.5 2.800l1.600 2L5.200 .3" stroke="#222" stroke-width="1" fill="none"/></svg>
<div class="t si" style="top:377.5px">HVAC Ductwork</div>
<div class="t si" style="top:390.0px">HVAC Equipment</div>
<div class="t si" style="top:402.5px">Initiation and Annunciation</div>
<div class="t si" style="top:415.0px">Kitchen and Dining Room</div>
<div class="t si" style="top:427.5px">Lighting</div>
<div class="t si" style="top:440.0px">Office Equipment</div>
<div class="t si" style="top:452.5px">Office Furniture</div>
<div class="t si" style="top:465.0px">Plants</div>
<div class="t si" style="top:477.5px">Plumbing</div>
<div class="t si" style="top:490.0px">Registers Grills and Diffusers</div>
<div class="t si" style="top:502.5px">Sofas</div>
<div class="t si" style="top:515.0px">Tables and Chairs</div>
<div class="t si" style="top:527.5px">Video Surveillance</div>
<div class="t si" style="top:540.0px">Elevation</div>
<svg style="left:186.500px;top:539.500px" width="3" height="4" viewBox="0 0 3 4"><path d="M.2 .2l2.500 1.800L.2 3.800z" fill="#444"/></svg>
<div class="a" style="left:228.300px;top:10.200px;width:69px;height:22px;border:1.200px solid #e8202a"></div>
<div class="a" style="left:3px;top:51.500px;width:77px;height:17.800px;border:1.200px solid #e8202a"></div>
<div class="a" style="left:9.300px;top:272.500px;width:79px;height:12.600px;border:1.200px solid #e8202a"></div>
<div class="a" style="left:94.800px;top:172.300px;width:97.500px;height:364.500px;border:1.300px solid #e8202a"></div>
<svg style="left:0;top:0" width="1000" height="542" viewBox="0 0 1000 542"><polygon points="219.88,29.57 107.32,58.85 106.45,55.62 93.20,64.10 108.92,64.79 108.05,61.56 220.12,30.43" fill="#e8202a"/><polygon points="28.15,87.00 27.87,254.50 24.22,254.51 29.10,266.00 33.92,254.49 30.27,254.50 29.05,87.00" fill="#e8202a"/><polygon points="32.84,293.46 80.83,361.25 78.16,363.18 90.00,371.90 85.46,357.91 82.78,359.85 33.56,292.94" fill="#e8202a"/></svg>
</body></html>
